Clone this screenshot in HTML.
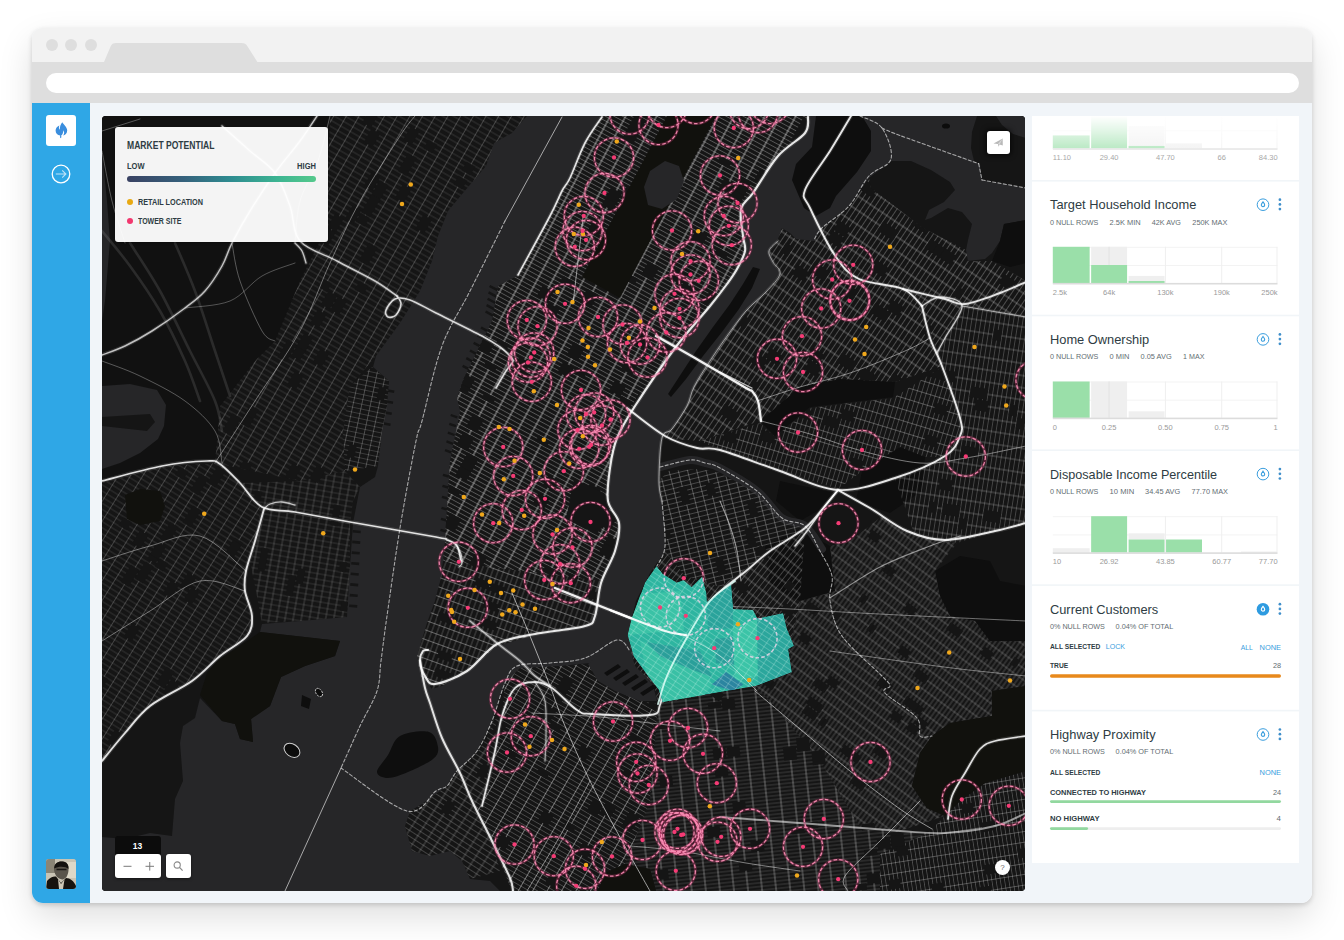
<!DOCTYPE html><html><head><meta charset="utf-8"><title>Market Potential</title><style>
*{box-sizing:border-box;margin:0;padding:0}
html,body{width:1344px;height:940px;overflow:hidden;background:#fff;font-family:"Liberation Sans",sans-serif;}
.win{position:absolute;left:32px;top:28px;width:1280px;height:875px;border-radius:11px;background:#f1f5f9;overflow:hidden;}
.shadow{position:absolute;left:32px;top:28px;width:1280px;height:875px;border-radius:11px;box-shadow:0 2px 5px rgba(0,0,0,.16),0 14px 34px rgba(0,0,0,.13);}
.tabs{position:absolute;left:0;top:0;width:1280px;height:34px;background:#f2f2f2;}
.dot{position:absolute;top:11px;width:12px;height:12px;border-radius:50%;background:#dedede;}
.urlrow{position:absolute;left:0;top:34px;width:1280px;height:41px;background:#dedede;}
.url{position:absolute;left:13.5px;top:11px;width:1253px;height:20px;border-radius:10px;background:#fff;}
.side{position:absolute;left:0;top:75px;width:58px;height:800px;background:#2fa7e6;}
.logo{position:absolute;left:14px;top:12px;width:30px;height:31px;border-radius:3px;background:#fff;}
.avatar{position:absolute;left:14px;top:756px;width:30px;height:30px;border-radius:3px;overflow:hidden;background:#b9b4a6;}
.map{position:absolute;left:70px;top:87.5px;width:923px;height:775px;border-radius:4px;overflow:hidden;background:#1b1b1b;}
.legend{position:absolute;left:13px;top:11px;width:213px;height:115px;border-radius:3px;background:rgba(255,255,255,.955);box-shadow:0 1px 3px rgba(0,0,0,.3);color:#2e3c43;font-weight:bold;}
.legend .t{position:absolute;left:12px;top:13px;font-size:10.4px;white-space:nowrap;transform-origin:0 0;transform:scaleX(.824)}
.legend .lo{position:absolute;left:12px;top:34.5px;font-size:8.4px;transform-origin:0 0;transform:scaleX(.9)}
.legend .hi{position:absolute;right:12px;top:34.5px;font-size:8.4px;transform-origin:100% 0;transform:scaleX(.9)}
.legend .bar{position:absolute;left:12px;top:49.5px;width:189px;height:6px;border-radius:3px;background:linear-gradient(90deg,#3a4263 0%,#35617c 30%,#2e8c90 55%,#3db592 80%,#55c98c 100%);}
.legend .it{position:absolute;left:23px;font-size:8.4px;white-space:nowrap;transform-origin:0 0;transform:scaleX(.885)}
.legend .d{position:absolute;left:11.5px;width:6.5px;height:6.5px;border-radius:50%;}
.zoomlbl{position:absolute;left:12.5px;top:720px;width:46px;height:20px;background:#0c0c0c;border-radius:3px 3px 0 0;color:#fff;font-size:8.5px;font-weight:bold;text-align:center;line-height:20px;}
.zoombox{position:absolute;left:12.5px;top:738px;width:46px;height:24px;background:#fff;border-radius:3px;box-shadow:0 1px 3px rgba(0,0,0,.5);}
.searchbox{position:absolute;left:64px;top:738px;width:24.5px;height:24px;background:#fff;border-radius:3px;box-shadow:0 1px 3px rgba(0,0,0,.5);}
.sharebox{position:absolute;left:884.8px;top:15.3px;width:23px;height:23px;background:#fff;border-radius:3px;box-shadow:0 0 5px 2px rgba(0,0,0,.55);}
.help{position:absolute;left:893px;top:744px;width:15px;height:15px;border-radius:50%;background:#fff;color:#666;font-size:8px;text-align:center;line-height:15.5px;}
.panel{position:absolute;left:1000px;top:87.5px;width:267px;height:747px;background:#fff;overflow:hidden;}
</style></head><body><div class="shadow"></div><div class="win"><div class="tabs"><div class="dot" style="left:13.5px"></div><div class="dot" style="left:33px"></div><div class="dot" style="left:53px"></div><svg style="position:absolute;left:0;top:0" width="300" height="34"><path d="M72 34 L78.6 18.5 Q80 15.1 84 15.1 L209.5 15.1 Q213.6 15.1 215.4 18.3 L225.4 34 Z" fill="#dedede"/></svg></div><div class="urlrow"><div class="url"></div></div><div class="side"><div class="logo"><svg width="30" height="31" viewBox="0 0 30 31"><path d="M16.3 7.2 C17.6 9.6 21.2 12 21.2 15.6 C21.2 18.6 19 20.2 17.2 20.4 C18.6 18.6 18.4 16.6 17.2 15.2 C17.4 17.6 16.4 19.6 15.2 20.4 L15.4 22.2 L14.7 23.2 L14 22.2 L14.2 20.5 C11.6 20.3 9.6 18.4 9.6 15.6 C9.6 12.6 11.6 11.2 13.4 10.4 C12.6 12.2 12.8 13.8 13.8 14.8 C13.6 11.8 14.8 9 16.3 7.2 Z" fill="#3a8ede"/></svg></div><svg style="position:absolute;left:18px;top:59.5px" width="22" height="22" viewBox="0 0 22 22"><circle cx="11" cy="11" r="8.8" fill="none" stroke="#fff" stroke-width="1.3"/><path d="M5.8 11 H15.6 M12.2 7.4 L15.9 11 L12.2 14.6" fill="none" stroke="#bfe3f8" stroke-width="1.1"/></svg><div class="avatar"><svg width="30" height="30" viewBox="0 0 30 30"><rect width="30" height="30" fill="#c9c4b4"/><rect x="0" y="0" width="9" height="14" fill="#8a8576"/><rect x="21" y="3" width="9" height="16" fill="#ddd8c8"/><path d="M8 11 C8 4 13 2 16.5 2.5 C21 3 23 6 22.5 11 C22.3 15 21 19 17 20.5 C12.5 20.5 9 17 8 11Z" fill="#5a554c"/><path d="M8.2 9.5 C8 4.5 12 2 16.5 2.5 C21 3 23 6 22.4 10 C20 7.5 13 7 8.2 9.5Z" fill="#14120f"/><path d="M10.5 10.5 H20.5" stroke="#1a1815" stroke-width="1.4"/><path d="M0 30 L1 22 C4 18 8 17 10 17.5 L15 24 L20 19 C24 19 28 22 30 27 L30 30Z" fill="#16130f"/><path d="M12 20 L15 25 L18.5 20.5 L17 30 L13 30Z" fill="#cfc9b8"/></svg></div></div><div class="map"><svg style="position:absolute;left:0;top:0" width="923.5" height="775" viewBox="102 115 923.5 775"><defs><pattern id="p_mn" width="13.6" height="4.1" patternUnits="userSpaceOnUse" patternTransform="rotate(28.4)"><path d="M0 2.05H13.6" stroke="#fff" stroke-opacity="0.285" stroke-width="0.9" fill="none"/><path d="M6.80 0V4.1" stroke="#fff" stroke-opacity="0.644" stroke-width="0.9" fill="none"/></pattern><pattern id="p_ms" width="5.2" height="9" patternUnits="userSpaceOnUse" patternTransform="rotate(20)"><path d="M0 4.50H5.2" stroke="#fff" stroke-opacity="0.396" stroke-width="0.8" fill="none"/><path d="M2.60 0V9" stroke="#fff" stroke-opacity="0.288" stroke-width="0.8" fill="none"/></pattern><pattern id="p_nj1" width="11" height="5.4" patternUnits="userSpaceOnUse" patternTransform="rotate(30)"><path d="M0 2.70H11" stroke="#fff" stroke-opacity="0.160" stroke-width="0.8" fill="none"/><path d="M5.50 0V5.4" stroke="#fff" stroke-opacity="0.240" stroke-width="0.8" fill="none"/></pattern><pattern id="p_hob" width="8.5" height="4.8" patternUnits="userSpaceOnUse" patternTransform="rotate(12)"><path d="M0 2.40H8.5" stroke="#fff" stroke-opacity="0.192" stroke-width="0.8" fill="none"/><path d="M4.25 0V4.8" stroke="#fff" stroke-opacity="0.288" stroke-width="0.8" fill="none"/></pattern><pattern id="p_jc" width="10.5" height="5.2" patternUnits="userSpaceOnUse" patternTransform="rotate(32)"><path d="M0 2.60H10.5" stroke="#fff" stroke-opacity="0.152" stroke-width="0.8" fill="none"/><path d="M5.25 0V5.2" stroke="#fff" stroke-opacity="0.228" stroke-width="0.8" fill="none"/></pattern><pattern id="p_jcd" width="8" height="5.5" patternUnits="userSpaceOnUse" patternTransform="rotate(10)"><path d="M0 2.75H8" stroke="#fff" stroke-opacity="0.160" stroke-width="0.8" fill="none"/><path d="M4.00 0V5.5" stroke="#fff" stroke-opacity="0.240" stroke-width="0.8" fill="none"/></pattern><pattern id="p_jcn" width="8" height="5.5" patternUnits="userSpaceOnUse" patternTransform="rotate(10)"><path d="M0 2.75H8" stroke="#fff" stroke-opacity="0.160" stroke-width="0.8" fill="none"/><path d="M4.00 0V5.5" stroke="#fff" stroke-opacity="0.240" stroke-width="0.8" fill="none"/></pattern><pattern id="p_ast" width="4.9" height="12" patternUnits="userSpaceOnUse" patternTransform="rotate(34)"><path d="M0 6.00H4.9" stroke="#fff" stroke-opacity="0.402" stroke-width="0.8" fill="none"/><path d="M2.45 0V12" stroke="#fff" stroke-opacity="0.315" stroke-width="0.8" fill="none"/></pattern><pattern id="p_sun" width="4.6" height="11" patternUnits="userSpaceOnUse" patternTransform="rotate(17)"><path d="M0 5.50H4.6" stroke="#fff" stroke-opacity="0.322" stroke-width="0.8" fill="none"/><path d="M2.30 0V11" stroke="#fff" stroke-opacity="0.252" stroke-width="0.8" fill="none"/></pattern><pattern id="p_jh" width="4.6" height="12" patternUnits="userSpaceOnUse" patternTransform="rotate(9)"><path d="M0 6.00H4.6" stroke="#fff" stroke-opacity="0.322" stroke-width="0.8" fill="none"/><path d="M2.30 0V12" stroke="#fff" stroke-opacity="0.252" stroke-width="0.8" fill="none"/></pattern><pattern id="p_gp" width="9" height="4.8" patternUnits="userSpaceOnUse" patternTransform="rotate(-14)"><path d="M0 2.40H9" stroke="#fff" stroke-opacity="0.270" stroke-width="0.8" fill="none"/><path d="M4.50 0V4.8" stroke="#fff" stroke-opacity="0.330" stroke-width="0.8" fill="none"/></pattern><pattern id="p_wb" width="4.6" height="10" patternUnits="userSpaceOnUse" patternTransform="rotate(38)"><path d="M0 5.00H4.6" stroke="#fff" stroke-opacity="0.330" stroke-width="0.8" fill="none"/><path d="M2.30 0V10" stroke="#fff" stroke-opacity="0.270" stroke-width="0.8" fill="none"/></pattern><pattern id="p_bw" width="4.0" height="9.5" patternUnits="userSpaceOnUse" patternTransform="rotate(36)"><path d="M0 4.75H4.0" stroke="#fff" stroke-opacity="0.297" stroke-width="0.8" fill="none"/><path d="M2.00 0V9.5" stroke="#fff" stroke-opacity="0.270" stroke-width="0.8" fill="none"/></pattern><pattern id="p_bs" width="14" height="3.7" patternUnits="userSpaceOnUse" patternTransform="rotate(-6)"><path d="M0 1.85H14" stroke="#fff" stroke-opacity="0.205" stroke-width="0.8" fill="none"/><path d="M7.00 0V3.7" stroke="#fff" stroke-opacity="0.462" stroke-width="0.8" fill="none"/></pattern><pattern id="p_eny" width="4.2" height="10.6" patternUnits="userSpaceOnUse" patternTransform="rotate(-9)"><path d="M0 5.30H4.2" stroke="#fff" stroke-opacity="0.297" stroke-width="0.8" fill="none"/><path d="M2.10 0V10.6" stroke="#fff" stroke-opacity="0.270" stroke-width="0.8" fill="none"/></pattern><pattern id="p_db" width="12.5" height="4.2" patternUnits="userSpaceOnUse" patternTransform="rotate(30)"><path d="M0 2.10H12.5" stroke="#fff" stroke-opacity="0.252" stroke-width="0.8" fill="none"/><path d="M6.25 0V4.2" stroke="#fff" stroke-opacity="0.468" stroke-width="0.8" fill="none"/></pattern><pattern id="p_rh" width="10" height="5" patternUnits="userSpaceOnUse" patternTransform="rotate(33)"><path d="M0 2.50H10" stroke="#fff" stroke-opacity="0.243" stroke-width="0.8" fill="none"/><path d="M5.00 0V5" stroke="#fff" stroke-opacity="0.297" stroke-width="0.8" fill="none"/></pattern><clipPath id="c_grids"><polygon points="602.0,115.0 585.0,142.0 570.0,177.0 562.0,190.0 550.0,215.0 517.0,275.0 498.0,285.0 492.0,320.0 464.0,377.0 457.0,397.0 460.0,410.0 450.0,460.0 447.0,505.0 445.0,540.0 443.0,560.0 603.0,580.0 615.0,550.0 619.0,522.0 608.0,500.0 610.0,467.0 617.0,437.0 635.0,405.0 675.0,347.0 710.0,305.0 727.0,283.0 745.0,250.0 741.0,208.0 753.0,192.0 778.0,155.0 805.0,132.0 808.0,115.0"/><polygon points="443.0,560.0 440.0,580.0 435.0,600.0 427.0,622.0 417.0,655.0 421.0,675.0 432.0,688.0 442.0,685.0 470.0,668.0 497.0,645.0 535.0,634.0 585.0,626.0 597.0,612.0 601.0,582.0 603.0,580.0"/><polygon points="330.0,115.0 527.0,115.0 512.0,132.0 494.0,142.0 486.0,165.0 463.0,192.0 448.0,210.0 438.0,235.0 432.0,260.0 420.0,290.0 400.0,322.0 376.0,355.0 350.0,385.0 343.0,430.0 345.0,470.0 300.0,480.0 215.0,462.0 220.0,405.0 255.0,360.0 275.0,340.0 300.0,280.0 325.0,230.0"/><polygon points="372.0,366.0 389.0,380.0 387.0,405.0 382.0,430.0 378.0,465.0 345.0,470.0 343.0,430.0 350.0,385.0"/><polygon points="102.0,482.0 162.0,465.0 220.0,462.0 262.0,506.0 255.0,540.0 246.0,570.0 245.0,590.0 252.0,615.0 247.0,635.0 220.0,655.0 192.0,680.0 150.0,705.0 125.0,732.0 102.0,760.0"/><polygon points="266.0,508.0 350.0,522.0 350.0,565.0 347.0,616.0 300.0,620.0 262.0,622.0 256.0,590.0 250.0,560.0"/><polygon points="240.0,482.0 262.0,506.0 295.0,511.0 350.0,521.0 353.0,500.0 360.0,486.0 345.0,470.0 300.0,480.0"/><polygon points="778.0,238.0 782.0,227.0 796.0,238.0 814.0,240.0 822.0,227.0 849.0,205.0 869.0,177.0 871.0,187.0 923.0,227.0 966.0,249.0 968.0,260.0 992.0,260.0 1026.0,280.0 1026.0,316.0 962.0,305.0 937.0,352.0 922.0,305.0 930.0,337.0 942.0,365.0 895.0,381.0 840.0,378.0 800.0,386.0 760.0,420.0 700.0,440.0 662.0,437.0 672.0,428.0 687.0,405.0 694.0,386.0 708.0,363.0 725.0,338.0 746.0,310.0 766.0,291.0 780.0,273.0 773.0,261.0 769.0,250.0"/><polygon points="760.0,422.0 775.0,436.0 810.0,407.0 850.0,402.0 893.0,397.0 942.0,366.0 960.0,418.0 960.0,436.0 945.0,456.0 925.0,456.0 900.0,446.0 862.0,470.0 838.0,488.0 780.0,470.0 720.0,449.0 700.0,440.0"/><polygon points="937.0,352.0 962.0,305.0 1026.0,316.0 1026.0,522.0 995.0,530.0 957.0,542.0 915.0,535.0 895.0,478.0 945.0,456.0 960.0,436.0 960.0,418.0 942.0,366.0"/><polygon points="662.0,500.0 659.0,480.0 668.0,470.0 700.0,468.0 720.0,472.0 757.0,492.0 782.0,518.0 805.0,528.0 770.0,550.0 720.0,586.0 685.0,575.0 665.0,550.0 664.0,520.0"/><polygon points="650.0,572.0 665.0,550.0 685.0,575.0 720.0,586.0 770.0,550.0 805.0,528.0 800.0,600.0 790.0,646.0 792.0,672.0 754.0,684.0 658.0,703.0 654.0,684.0 635.0,665.0 629.0,642.0 635.0,612.0"/><polygon points="792.0,672.0 790.0,646.0 800.0,600.0 835.0,590.0 830.0,545.0 850.0,540.0 882.0,515.0 915.0,535.0 957.0,542.0 935.0,570.0 940.0,595.0 950.0,615.0 975.0,620.0 990.0,640.0 1026.0,640.0 1026.0,685.0 992.0,690.0 992.0,715.0 950.0,722.0 932.0,735.0 920.0,752.0 912.0,785.0 927.0,807.0 945.0,815.0 900.0,830.0 860.0,826.0 820.0,760.0 770.0,700.0 754.0,684.0"/><polygon points="658.0,703.0 754.0,684.0 770.0,700.0 820.0,760.0 860.0,826.0 900.0,830.0 928.0,832.0 880.0,853.0 880.0,890.0 656.0,890.0 650.0,868.0 625.0,863.0 650.0,800.0 655.0,740.0"/><polygon points="928.0,832.0 945.0,815.0 960.0,800.0 985.0,782.0 1026.0,770.0 1026.0,890.0 880.0,890.0 880.0,853.0"/><polygon points="505.0,682.0 520.0,667.0 560.0,665.0 588.0,663.0 598.0,680.0 615.0,690.0 640.0,700.0 658.0,703.0 655.0,740.0 650.0,800.0 625.0,863.0 605.0,872.0 598.0,890.0 512.0,890.0 492.0,840.0 472.0,800.0 482.0,805.0 495.0,750.0 502.0,715.0"/><polygon points="410.0,810.0 422.0,803.0 447.0,785.0 457.0,770.0 477.0,750.0 492.0,720.0 502.0,715.0 495.0,750.0 482.0,805.0 472.0,800.0 492.0,840.0 500.0,870.0 470.0,878.0 462.0,860.0 450.0,850.0 430.0,855.0 412.0,850.0 405.0,825.0"/></clipPath><clipPath id="c_teal"><polygon points="656.5,565.0 662.7,572.8 676.7,581.6 683.7,579.0 691.6,586.0 702.2,575.5 706.2,591.3 707.0,601.0 731.0,583.4 733.0,608.0 753.0,608.8 757.5,617.6 783.0,612.3 786.5,627.3 793.8,644.8 788.0,648.0 791.7,671.0 755.7,685.0 662.7,701.0 659.0,688.7 645.0,671.0 633.7,655.4 627.6,634.3 632.0,616.7 645.0,581.6"/></clipPath><pattern id="p_teal" width="9" height="4.6" patternUnits="userSpaceOnUse" patternTransform="rotate(34)"><path d="M0 2.3H9 M4.5 0V4.6" stroke="#dffcf4" stroke-opacity=".33" stroke-width=".7" fill="none"/></pattern></defs><rect x="102" y="115" width="924" height="775" fill="#151515"/><polygon points="527.0,115.0 512.0,132.0 494.0,142.0 486.0,165.0 463.0,192.0 448.0,210.0 438.0,235.0 432.0,260.0 420.0,290.0 400.0,322.0 376.0,355.0 373.0,366.0 389.0,380.0 387.0,405.0 382.0,430.0 378.0,465.0 375.0,476.0 360.0,486.0 353.0,522.0 350.0,565.0 347.0,616.0 300.0,620.0 262.0,623.0 260.0,631.0 340.0,640.0 335.0,655.0 305.0,665.0 281.0,676.0 270.0,705.0 251.0,718.0 253.0,741.0 240.0,738.0 235.0,723.0 222.0,720.0 200.0,697.0 195.0,717.0 183.0,725.0 180.0,742.0 183.0,780.0 175.0,798.0 172.0,835.0 150.0,832.0 125.0,838.0 102.0,836.0 102.0,890.0 500.0,890.0 490.0,880.0 470.0,878.0 462.0,860.0 450.0,850.0 430.0,855.0 412.0,850.0 405.0,825.0 410.0,810.0 422.0,803.0 447.0,785.0 457.0,770.0 477.0,750.0 492.0,720.0 505.0,682.0 520.0,667.0 560.0,665.0 590.0,662.0 617.0,660.0 635.0,655.0 630.0,625.0 636.0,600.0 650.0,572.0 665.0,550.0 664.0,520.0 662.0,500.0 659.0,480.0 662.0,437.0 672.0,428.0 687.0,405.0 694.0,386.0 708.0,363.0 725.0,338.0 746.0,310.0 766.0,291.0 780.0,273.0 773.0,261.0 769.0,250.0 778.0,238.0 782.0,227.0 790.0,232.0 796.0,238.0 814.0,240.0 822.0,227.0 849.0,205.0 869.0,177.0 891.0,160.0 911.0,160.0 931.0,169.0 950.0,181.0 955.0,189.0 944.0,201.0 929.0,209.0 925.0,219.0 931.0,217.0 948.0,207.0 962.0,211.0 972.0,223.0 968.0,239.0 966.0,249.0 968.0,260.0 985.0,258.0 992.0,252.0 1000.0,240.0 1004.0,223.0 1026.0,219.0 1026.0,187.0 982.0,179.0 980.0,163.0 974.0,160.0 971.0,147.0 972.0,131.0 977.0,115.0" fill="#262628"/><polygon points="602.0,115.0 585.0,142.0 570.0,177.0 562.0,190.0 550.0,215.0 517.0,275.0 498.0,285.0 492.0,320.0 464.0,377.0 457.0,397.0 460.0,410.0 450.0,460.0 447.0,505.0 445.0,540.0 443.0,560.0 440.0,580.0 435.0,600.0 427.0,622.0 417.0,655.0 421.0,675.0 432.0,688.0 442.0,685.0 470.0,668.0 497.0,645.0 535.0,634.0 585.0,626.0 597.0,612.0 601.0,582.0 603.0,580.0 615.0,550.0 619.0,522.0 608.0,500.0 610.0,467.0 617.0,437.0 635.0,405.0 675.0,347.0 710.0,305.0 727.0,283.0 745.0,250.0 741.0,208.0 753.0,192.0 778.0,155.0 805.0,132.0 808.0,115.0" fill="#151515"/><polygon points="816.0,115.0 812.0,146.0 796.0,163.0 792.0,179.0 804.0,207.0 816.0,215.0 830.0,207.0 836.0,195.0 857.0,171.0 871.0,150.0 871.0,130.0 862.0,115.0" fill="#0e0e0e"/><polygon points="760.0,268.0 752.0,287.0 739.0,308.0 722.0,331.0 703.0,355.0 686.0,378.0 671.0,396.0 668.0,393.0 681.0,373.0 696.0,350.0 713.0,326.0 730.0,303.0 743.0,283.0 753.0,266.0" fill="#0e0e0e"/><path d="M400.0 735.0 C406.8 731.2 422.7 729.2 429.0 731.0 C435.3 732.8 437.3 741.5 438.0 746.0 C438.7 750.5 438.0 753.8 433.0 758.0 C428.0 762.2 415.5 767.8 408.0 771.0 C400.5 774.2 393.2 777.0 388.0 777.0 C382.8 777.0 377.0 774.8 377.0 771.0 C377.0 767.2 384.2 760.0 388.0 754.0 C391.8 748.0 393.2 738.8 400.0 735.0Z" fill="#0e0e0e"/><polygon points="588.0,663.0 617.0,640.0 630.0,648.0 635.0,665.0 653.0,684.0 657.0,700.0 640.0,700.0 615.0,690.0 598.0,680.0" fill="#262628"/><polygon points="604.0,672.0 618.0,663.0 621.0,666.0 607.0,675.0" fill="#0e0e0e"/><polygon points="613.0,677.0 627.0,668.0 630.0,671.0 616.0,680.0" fill="#0e0e0e"/><polygon points="622.0,682.0 636.0,673.0 639.0,676.0 625.0,685.0" fill="#0e0e0e"/><polygon points="631.0,687.0 645.0,678.0 648.0,681.0 634.0,690.0" fill="#0e0e0e"/><polygon points="640.0,692.0 654.0,683.0 657.0,686.0 643.0,695.0" fill="#0e0e0e"/><polygon points="760.0,420.0 800.0,386.0 840.0,378.0 895.0,381.0 893.0,396.0 850.0,401.0 810.0,406.0 775.0,435.0" fill="#0e0e0e"/><polygon points="862.0,470.0 900.0,446.0 925.0,456.0 922.0,490.0 890.0,512.0 856.0,500.0" fill="#0e0e0e"/><polygon points="780.0,480.0 835.0,492.0 826.0,505.0 800.0,520.0 776.0,500.0" fill="#0e0e0e"/><polygon points="935.0,570.0 960.0,555.0 990.0,560.0 1000.0,580.0 1026.0,585.0 1026.0,640.0 990.0,640.0 975.0,620.0 950.0,615.0 940.0,595.0" fill="#0e0e0e"/><polygon points="765.0,545.0 800.0,528.0 830.0,545.0 835.0,590.0 800.0,600.0 770.0,585.0" fill="#0e0e0e"/><polygon points="1004.0,223.0 1026.0,219.0 1026.0,262.0 1010.0,266.0 992.0,260.0 1000.0,240.0" fill="#0e0e0e"/><polygon points="996.0,115.0 1026.0,115.0 1026.0,137.0 1013.0,133.0 1002.0,124.0" fill="#262628"/><polygon points="498.1,288.1 490.2,283.9 489.0,286.0 496.9,290.3" fill="#151515"/><polygon points="497.1,294.5 489.2,290.3 488.0,292.4 495.9,296.7" fill="#151515"/><polygon points="496.1,300.9 488.2,296.7 487.0,298.8 494.9,303.1" fill="#151515"/><polygon points="495.1,307.3 487.2,303.1 486.0,305.2 493.9,309.5" fill="#151515"/><polygon points="494.1,313.7 486.2,309.5 485.0,311.6 492.9,315.9" fill="#151515"/><polygon points="487.7,328.8 481.6,325.4 480.4,327.6 486.6,330.9" fill="#151515"/><polygon points="484.1,336.4 477.9,333.1 476.8,335.2 482.9,338.6" fill="#151515"/><polygon points="480.4,344.1 474.2,340.8 473.1,342.9 479.3,346.2" fill="#151515"/><polygon points="476.7,351.8 470.6,348.4 469.4,350.6 475.6,353.9" fill="#151515"/><polygon points="473.1,359.4 466.9,356.1 465.8,358.2 471.9,361.6" fill="#151515"/><polygon points="469.4,367.1 463.2,363.8 462.1,365.9 468.3,369.2" fill="#151515"/><polygon points="457.7,415.3 451.1,412.9 450.3,415.1 456.9,417.5" fill="#151515"/><polygon points="456.3,424.1 449.7,421.7 448.9,423.9 455.5,426.3" fill="#151515"/><polygon points="454.9,432.9 448.3,430.5 447.5,432.7 454.1,435.1" fill="#151515"/><polygon points="453.5,441.7 446.9,439.3 446.1,441.5 452.7,443.9" fill="#151515"/><polygon points="452.1,450.5 445.5,448.1 444.7,450.3 451.3,452.7" fill="#151515"/><polygon points="449.1,474.3 443.3,472.8 442.6,475.1 448.4,476.7" fill="#151515"/><polygon points="448.6,485.3 442.8,483.8 442.1,486.1 447.9,487.7" fill="#151515"/><polygon points="448.1,496.3 442.3,494.8 441.6,497.1 447.4,498.7" fill="#151515"/><polygon points="447.6,507.3 441.8,505.8 441.1,508.1 446.9,509.7" fill="#151515"/><polygon points="447.1,518.3 441.3,516.8 440.6,519.1 446.4,520.7" fill="#151515"/><polygon points="446.6,529.3 440.8,527.8 440.1,530.1 445.9,531.7" fill="#151515"/><polygon points="387.6,388.2 394.5,389.4 394.0,392.0 387.1,390.8" fill="#151515"/><polygon points="386.4,399.2 393.2,400.4 392.8,403.0 385.9,401.8" fill="#151515"/><polygon points="385.1,410.2 392.0,411.4 391.5,414.0 384.6,412.8" fill="#151515"/><polygon points="383.9,421.2 390.7,422.4 390.3,425.0 383.4,423.8" fill="#151515"/><polygon points="352.9,529.0 360.8,529.7 360.6,532.3 352.6,531.6" fill="#151515"/><polygon points="352.4,539.6 360.3,540.3 360.1,542.9 352.1,542.2" fill="#151515"/><polygon points="351.9,550.3 359.8,551.0 359.6,553.6 351.6,552.9" fill="#151515"/><polygon points="351.4,560.9 359.3,561.6 359.1,564.2 351.1,563.5" fill="#151515"/><polygon points="350.9,571.5 358.8,572.2 358.6,574.8 350.6,574.1" fill="#151515"/><polygon points="350.4,582.1 358.3,582.8 358.1,585.4 350.1,584.7" fill="#151515"/><polygon points="349.9,592.8 357.8,593.5 357.6,596.1 349.6,595.4" fill="#151515"/><polygon points="349.4,603.4 357.3,604.1 357.1,606.7 349.1,606.0" fill="#151515"/><path d="M660.0 466.0 C665.0 464.8 682.5 459.7 690.0 459.0 C697.5 458.3 700.0 460.7 705.0 462.0 C710.0 463.3 711.3 462.3 720.0 467.0 C728.7 471.7 746.7 481.7 757.0 490.0 C767.3 498.3 774.0 511.2 782.0 517.0 C790.0 522.8 798.3 519.8 805.0 525.0 C811.7 530.2 819.2 544.2 822.0 548.0" fill="none" stroke="#262628" stroke-opacity="1" stroke-width="8" stroke-linecap="round" stroke-linejoin="round"/><polygon points="102.0,115.0 330.0,115.0 325.0,230.0 300.0,280.0 275.0,340.0 255.0,360.0 220.0,405.0 215.0,462.0 162.0,465.0 102.0,482.0" fill="#111111"/><polygon points="102.0,385.0 130.0,383.0 157.0,389.0 166.0,404.0 164.0,425.0 158.0,438.0 140.0,452.0 120.0,462.0 102.0,468.0" fill="#262628"/><polygon points="102.0,416.0 150.0,413.0 155.0,421.0 147.0,430.0 102.0,425.0" fill="#151515"/><polygon points="102.0,150.0 107.0,200.0 110.0,240.0 105.0,300.0 102.0,320.0" fill="#262628"/><polygon points="602.0,115.0 585.0,142.0 570.0,177.0 562.0,190.0 550.0,215.0 517.0,275.0 498.0,285.0 492.0,320.0 464.0,377.0 457.0,397.0 460.0,410.0 450.0,460.0 447.0,505.0 445.0,540.0 443.0,560.0 603.0,580.0 615.0,550.0 619.0,522.0 608.0,500.0 610.0,467.0 617.0,437.0 635.0,405.0 675.0,347.0 710.0,305.0 727.0,283.0 745.0,250.0 741.0,208.0 753.0,192.0 778.0,155.0 805.0,132.0 808.0,115.0" fill="url(#p_mn)"/><polygon points="443.0,560.0 440.0,580.0 435.0,600.0 427.0,622.0 417.0,655.0 421.0,675.0 432.0,688.0 442.0,685.0 470.0,668.0 497.0,645.0 535.0,634.0 585.0,626.0 597.0,612.0 601.0,582.0 603.0,580.0" fill="url(#p_ms)"/><polygon points="330.0,115.0 527.0,115.0 512.0,132.0 494.0,142.0 486.0,165.0 463.0,192.0 448.0,210.0 438.0,235.0 432.0,260.0 420.0,290.0 400.0,322.0 376.0,355.0 350.0,385.0 343.0,430.0 345.0,470.0 300.0,480.0 215.0,462.0 220.0,405.0 255.0,360.0 275.0,340.0 300.0,280.0 325.0,230.0" fill="url(#p_nj1)"/><polygon points="372.0,366.0 389.0,380.0 387.0,405.0 382.0,430.0 378.0,465.0 345.0,470.0 343.0,430.0 350.0,385.0" fill="url(#p_hob)"/><polygon points="102.0,482.0 162.0,465.0 220.0,462.0 262.0,506.0 255.0,540.0 246.0,570.0 245.0,590.0 252.0,615.0 247.0,635.0 220.0,655.0 192.0,680.0 150.0,705.0 125.0,732.0 102.0,760.0" fill="url(#p_jc)"/><polygon points="266.0,508.0 350.0,522.0 350.0,565.0 347.0,616.0 300.0,620.0 262.0,622.0 256.0,590.0 250.0,560.0" fill="url(#p_jcd)"/><polygon points="240.0,482.0 262.0,506.0 295.0,511.0 350.0,521.0 353.0,500.0 360.0,486.0 345.0,470.0 300.0,480.0" fill="url(#p_jcn)"/><polygon points="778.0,238.0 782.0,227.0 796.0,238.0 814.0,240.0 822.0,227.0 849.0,205.0 869.0,177.0 871.0,187.0 923.0,227.0 966.0,249.0 968.0,260.0 992.0,260.0 1026.0,280.0 1026.0,316.0 962.0,305.0 937.0,352.0 922.0,305.0 930.0,337.0 942.0,365.0 895.0,381.0 840.0,378.0 800.0,386.0 760.0,420.0 700.0,440.0 662.0,437.0 672.0,428.0 687.0,405.0 694.0,386.0 708.0,363.0 725.0,338.0 746.0,310.0 766.0,291.0 780.0,273.0 773.0,261.0 769.0,250.0" fill="url(#p_ast)"/><polygon points="760.0,422.0 775.0,436.0 810.0,407.0 850.0,402.0 893.0,397.0 942.0,366.0 960.0,418.0 960.0,436.0 945.0,456.0 925.0,456.0 900.0,446.0 862.0,470.0 838.0,488.0 780.0,470.0 720.0,449.0 700.0,440.0" fill="url(#p_sun)"/><polygon points="937.0,352.0 962.0,305.0 1026.0,316.0 1026.0,522.0 995.0,530.0 957.0,542.0 915.0,535.0 895.0,478.0 945.0,456.0 960.0,436.0 960.0,418.0 942.0,366.0" fill="url(#p_jh)"/><polygon points="662.0,500.0 659.0,480.0 668.0,470.0 700.0,468.0 720.0,472.0 757.0,492.0 782.0,518.0 805.0,528.0 770.0,550.0 720.0,586.0 685.0,575.0 665.0,550.0 664.0,520.0" fill="url(#p_gp)"/><polygon points="650.0,572.0 665.0,550.0 685.0,575.0 720.0,586.0 770.0,550.0 805.0,528.0 800.0,600.0 790.0,646.0 792.0,672.0 754.0,684.0 658.0,703.0 654.0,684.0 635.0,665.0 629.0,642.0 635.0,612.0" fill="url(#p_wb)"/><polygon points="792.0,672.0 790.0,646.0 800.0,600.0 835.0,590.0 830.0,545.0 850.0,540.0 882.0,515.0 915.0,535.0 957.0,542.0 935.0,570.0 940.0,595.0 950.0,615.0 975.0,620.0 990.0,640.0 1026.0,640.0 1026.0,685.0 992.0,690.0 992.0,715.0 950.0,722.0 932.0,735.0 920.0,752.0 912.0,785.0 927.0,807.0 945.0,815.0 900.0,830.0 860.0,826.0 820.0,760.0 770.0,700.0 754.0,684.0" fill="url(#p_bw)"/><polygon points="658.0,703.0 754.0,684.0 770.0,700.0 820.0,760.0 860.0,826.0 900.0,830.0 928.0,832.0 880.0,853.0 880.0,890.0 656.0,890.0 650.0,868.0 625.0,863.0 650.0,800.0 655.0,740.0" fill="url(#p_bs)"/><polygon points="928.0,832.0 945.0,815.0 960.0,800.0 985.0,782.0 1026.0,770.0 1026.0,890.0 880.0,890.0 880.0,853.0" fill="url(#p_eny)"/><polygon points="505.0,682.0 520.0,667.0 560.0,665.0 588.0,663.0 598.0,680.0 615.0,690.0 640.0,700.0 658.0,703.0 655.0,740.0 650.0,800.0 625.0,863.0 605.0,872.0 598.0,890.0 512.0,890.0 492.0,840.0 472.0,800.0 482.0,805.0 495.0,750.0 502.0,715.0" fill="url(#p_db)"/><polygon points="410.0,810.0 422.0,803.0 447.0,785.0 457.0,770.0 477.0,750.0 492.0,720.0 502.0,715.0 495.0,750.0 482.0,805.0 472.0,800.0 492.0,840.0 500.0,870.0 470.0,878.0 462.0,860.0 450.0,850.0 430.0,855.0 412.0,850.0 405.0,825.0" fill="url(#p_rh)"/><g fill="#151515" clip-path="url(#c_grids)"><rect x="678.6" y="145.3" width="12.5" height="7.2" transform="rotate(28.4 684.8 148.9)"/><rect x="624.9" y="126.1" width="12.5" height="15.4" transform="rotate(28.4 631.1 133.8)"/><rect x="590.0" y="219.2" width="12.5" height="15.4" transform="rotate(28.4 596.3 226.9)"/><rect x="460.5" y="374.9" width="12.5" height="11.3" transform="rotate(28.4 466.8 380.6)"/><rect x="456.6" y="384.2" width="12.5" height="7.2" transform="rotate(28.4 462.9 387.8)"/><rect x="793.5" y="130.8" width="12.5" height="11.3" transform="rotate(28.4 799.8 136.5)"/><rect x="730.6" y="190.0" width="12.5" height="11.3" transform="rotate(28.4 736.8 195.6)"/><rect x="573.5" y="368.1" width="12.5" height="7.2" transform="rotate(28.4 579.8 371.7)"/><rect x="623.1" y="360.3" width="12.5" height="11.3" transform="rotate(28.4 629.3 365.9)"/><rect x="604.9" y="536.9" width="12.5" height="11.3" transform="rotate(28.4 611.1 542.5)"/><rect x="544.8" y="476.4" width="12.5" height="11.3" transform="rotate(28.4 551.0 482.1)"/><rect x="612.3" y="263.8" width="12.5" height="15.4" transform="rotate(28.4 618.5 271.5)"/><rect x="543.6" y="566.4" width="12.5" height="7.2" transform="rotate(28.4 549.9 570.0)"/><rect x="623.4" y="188.0" width="12.5" height="11.3" transform="rotate(28.4 629.7 193.6)"/><rect x="495.9" y="340.1" width="12.5" height="7.2" transform="rotate(28.4 502.1 343.7)"/><rect x="569.4" y="343.1" width="12.5" height="15.4" transform="rotate(28.4 575.6 350.8)"/><rect x="536.5" y="436.7" width="12.5" height="7.2" transform="rotate(28.4 542.7 440.3)"/><rect x="459.1" y="432.7" width="12.5" height="15.4" transform="rotate(28.4 465.3 440.4)"/><rect x="539.1" y="286.9" width="12.5" height="11.3" transform="rotate(28.4 545.3 292.5)"/><rect x="457.4" y="466.4" width="12.5" height="11.3" transform="rotate(28.4 463.7 472.1)"/><rect x="705.7" y="291.0" width="12.5" height="15.4" transform="rotate(28.4 712.0 298.7)"/><rect x="545.2" y="304.2" width="12.5" height="11.3" transform="rotate(28.4 551.4 309.8)"/><rect x="679.9" y="283.8" width="12.5" height="11.3" transform="rotate(28.4 686.1 289.4)"/><rect x="611.4" y="381.9" width="12.5" height="11.3" transform="rotate(28.4 617.6 387.5)"/><rect x="635.3" y="394.8" width="12.5" height="11.3" transform="rotate(28.4 641.5 400.5)"/><rect x="619.4" y="397.6" width="12.5" height="7.2" transform="rotate(28.4 625.7 401.2)"/><rect x="602.7" y="510.3" width="12.5" height="15.4" transform="rotate(28.4 608.9 518.0)"/><rect x="582.7" y="289.8" width="12.5" height="15.4" transform="rotate(28.4 589.0 297.5)"/><rect x="666.6" y="138.8" width="12.5" height="7.2" transform="rotate(28.4 672.8 142.4)"/><rect x="482.5" y="393.5" width="12.5" height="7.2" transform="rotate(28.4 488.7 397.1)"/><rect x="446.0" y="514.1" width="12.5" height="15.4" transform="rotate(28.4 452.2 521.8)"/><rect x="560.8" y="277.3" width="12.5" height="7.2" transform="rotate(28.4 567.0 280.9)"/><rect x="480.0" y="336.8" width="12.5" height="15.4" transform="rotate(28.4 486.3 344.5)"/><rect x="616.2" y="258.6" width="12.5" height="11.3" transform="rotate(28.4 622.4 264.3)"/><rect x="535.0" y="494.4" width="12.5" height="11.3" transform="rotate(28.4 541.3 500.1)"/><rect x="629.5" y="205.3" width="12.5" height="11.3" transform="rotate(28.4 635.8 210.9)"/><rect x="484.2" y="361.8" width="12.5" height="7.2" transform="rotate(28.4 490.4 365.4)"/><rect x="715.2" y="249.0" width="12.5" height="7.2" transform="rotate(28.4 721.5 252.6)"/><rect x="693.3" y="230.4" width="12.5" height="11.3" transform="rotate(28.4 699.5 236.1)"/><rect x="515.9" y="358.2" width="12.5" height="11.3" transform="rotate(28.4 522.2 363.9)"/><rect x="586.5" y="485.0" width="12.5" height="11.3" transform="rotate(28.4 592.8 490.6)"/><rect x="624.2" y="274.4" width="12.5" height="7.2" transform="rotate(28.4 630.5 278.0)"/><rect x="603.7" y="196.0" width="12.5" height="11.3" transform="rotate(28.4 609.9 201.6)"/><rect x="601.0" y="544.1" width="12.5" height="11.3" transform="rotate(28.4 607.2 549.7)"/><rect x="468.8" y="414.6" width="12.5" height="15.4" transform="rotate(28.4 475.1 422.3)"/><rect x="607.6" y="188.7" width="12.5" height="11.3" transform="rotate(28.4 613.8 194.4)"/><rect x="472.1" y="551.6" width="12.5" height="15.4" transform="rotate(28.4 478.4 559.3)"/><rect x="799.4" y="117.9" width="12.5" height="15.4" transform="rotate(28.4 805.6 125.6)"/><rect x="736.4" y="177.1" width="12.5" height="15.4" transform="rotate(28.4 742.7 184.8)"/><rect x="671.8" y="270.1" width="12.5" height="11.3" transform="rotate(28.4 678.1 275.7)"/><rect x="447.7" y="486.5" width="12.5" height="7.2" transform="rotate(28.4 453.9 490.1)"/><rect x="600.7" y="516.0" width="12.5" height="11.3" transform="rotate(28.4 607.0 521.6)"/><rect x="559.6" y="363.2" width="12.5" height="11.3" transform="rotate(28.4 565.9 368.9)"/><rect x="463.3" y="453.6" width="12.5" height="15.4" transform="rotate(28.4 469.5 461.3)"/><rect x="756.2" y="171.2" width="12.5" height="11.3" transform="rotate(28.4 762.4 176.9)"/><rect x="630.7" y="115.3" width="12.5" height="15.4" transform="rotate(28.4 637.0 123.0)"/><rect x="720.6" y="179.9" width="12.5" height="11.3" transform="rotate(28.4 726.8 185.6)"/><rect x="644.0" y="262.3" width="12.5" height="15.4" transform="rotate(28.4 650.2 270.0)"/><rect x="718.3" y="157.5" width="12.5" height="7.2" transform="rotate(28.4 724.6 161.1)"/><rect x="662.6" y="344.3" width="12.5" height="11.3" transform="rotate(28.4 668.8 350.0)"/><rect x="636.7" y="335.0" width="12.5" height="11.3" transform="rotate(28.4 643.0 340.7)"/><rect x="587.0" y="590.7" width="14.6" height="7.9" transform="rotate(20 594.3 594.6)"/><rect x="568.2" y="573.3" width="9.4" height="7.9" transform="rotate(20 572.9 577.3)"/><rect x="483.6" y="600.9" width="14.6" height="7.9" transform="rotate(20 490.9 604.9)"/><rect x="489.8" y="584.0" width="14.6" height="7.9" transform="rotate(20 497.1 588.0)"/><rect x="437.6" y="651.2" width="14.6" height="7.9" transform="rotate(20 444.9 655.2)"/><rect x="433.8" y="669.9" width="19.8" height="7.9" transform="rotate(20 443.7 673.9)"/><rect x="482.4" y="619.6" width="14.6" height="7.9" transform="rotate(20 489.7 623.6)"/><rect x="437.6" y="613.9" width="19.8" height="7.9" transform="rotate(20 447.5 617.8)"/><rect x="475.1" y="578.7" width="14.6" height="7.9" transform="rotate(20 482.4 582.6)"/><rect x="320.0" y="279.3" width="9.9" height="9.8" transform="rotate(30 324.9 284.2)"/><rect x="333.6" y="297.0" width="9.9" height="15.2" transform="rotate(30 338.6 304.6)"/><rect x="367.0" y="129.2" width="9.9" height="15.2" transform="rotate(30 371.9 136.8)"/><rect x="425.4" y="140.7" width="9.9" height="9.8" transform="rotate(30 430.4 145.6)"/><rect x="455.4" y="176.7" width="9.9" height="9.8" transform="rotate(30 460.4 181.6)"/><rect x="398.4" y="184.8" width="9.9" height="15.2" transform="rotate(30 403.4 192.4)"/><rect x="313.3" y="310.2" width="9.9" height="15.2" transform="rotate(30 318.2 317.8)"/><rect x="406.4" y="127.0" width="9.9" height="15.2" transform="rotate(30 411.3 134.6)"/><rect x="374.0" y="180.4" width="9.9" height="20.6" transform="rotate(30 378.9 190.7)"/><rect x="367.1" y="172.9" width="9.9" height="15.2" transform="rotate(30 372.1 180.5)"/><rect x="365.9" y="194.4" width="9.9" height="20.6" transform="rotate(30 370.8 204.7)"/><rect x="244.4" y="404.9" width="9.9" height="20.6" transform="rotate(30 249.3 415.2)"/><rect x="324.1" y="291.5" width="9.9" height="15.2" transform="rotate(30 329.0 299.1)"/><rect x="322.5" y="228.2" width="9.9" height="15.2" transform="rotate(30 327.5 235.8)"/><rect x="288.0" y="464.0" width="9.9" height="15.2" transform="rotate(30 293.0 471.6)"/><rect x="294.4" y="342.9" width="9.9" height="15.2" transform="rotate(30 299.3 350.5)"/><rect x="365.6" y="109.7" width="9.9" height="15.2" transform="rotate(30 370.5 117.3)"/><rect x="463.5" y="162.7" width="9.9" height="9.8" transform="rotate(30 468.5 167.6)"/><rect x="330.6" y="214.2" width="9.9" height="15.2" transform="rotate(30 335.6 221.8)"/><rect x="239.1" y="460.7" width="9.9" height="15.2" transform="rotate(30 244.1 468.3)"/><rect x="312.5" y="465.6" width="9.9" height="15.2" transform="rotate(30 317.4 473.2)"/><rect x="299.8" y="333.6" width="9.9" height="15.2" transform="rotate(30 304.7 341.2)"/><rect x="226.7" y="413.4" width="9.9" height="20.6" transform="rotate(30 231.7 423.7)"/><rect x="241.7" y="415.0" width="9.9" height="9.8" transform="rotate(30 246.6 419.9)"/><rect x="290.4" y="371.8" width="9.9" height="15.2" transform="rotate(30 295.4 379.4)"/><rect x="282.2" y="339.4" width="9.9" height="20.6" transform="rotate(30 287.1 349.7)"/><rect x="363.3" y="242.8" width="9.9" height="20.6" transform="rotate(30 368.3 253.1)"/><rect x="316.1" y="349.3" width="9.9" height="15.2" transform="rotate(30 321.1 356.9)"/><rect x="402.4" y="153.2" width="9.9" height="20.6" transform="rotate(30 407.3 163.5)"/><rect x="418.9" y="215.3" width="9.9" height="15.2" transform="rotate(30 423.8 222.9)"/><rect x="356.6" y="281.8" width="9.9" height="9.8" transform="rotate(30 361.6 286.7)"/><rect x="357.8" y="213.9" width="9.9" height="9.8" transform="rotate(30 362.7 218.8)"/><rect x="348.2" y="205.7" width="9.9" height="15.2" transform="rotate(30 353.2 213.3)"/><rect x="377.7" y="386.0" width="7.4" height="13.4" transform="rotate(12 381.4 392.7)"/><rect x="348.1" y="443.5" width="7.4" height="13.4" transform="rotate(12 351.8 450.2)"/><rect x="176.9" y="467.5" width="9.4" height="9.4" transform="rotate(32 181.6 472.2)"/><rect x="160.6" y="666.7" width="9.4" height="19.8" transform="rotate(32 165.3 676.6)"/><rect x="150.6" y="546.6" width="9.4" height="14.6" transform="rotate(32 155.3 553.9)"/><rect x="94.1" y="674.2" width="9.4" height="19.8" transform="rotate(32 98.8 684.1)"/><rect x="139.6" y="561.6" width="9.4" height="19.8" transform="rotate(32 144.3 571.5)"/><rect x="110.4" y="729.9" width="9.4" height="14.6" transform="rotate(32 115.1 737.2)"/><rect x="231.6" y="538.5" width="9.4" height="9.4" transform="rotate(32 236.3 543.2)"/><rect x="228.9" y="540.3" width="9.4" height="14.6" transform="rotate(32 233.6 547.6)"/><rect x="135.6" y="531.0" width="9.4" height="14.6" transform="rotate(32 140.3 538.3)"/><rect x="125.2" y="564.9" width="9.4" height="19.8" transform="rotate(32 129.9 574.8)"/><rect x="211.9" y="465.8" width="9.4" height="19.8" transform="rotate(32 216.6 475.7)"/><rect x="166.8" y="679.3" width="9.4" height="14.6" transform="rotate(32 171.5 686.6)"/><rect x="187.1" y="505.4" width="9.4" height="19.8" transform="rotate(32 191.8 515.3)"/><rect x="153.4" y="542.2" width="9.4" height="14.6" transform="rotate(32 158.1 549.5)"/><rect x="164.4" y="521.9" width="9.4" height="19.8" transform="rotate(32 169.1 531.8)"/><rect x="183.5" y="573.2" width="9.4" height="14.6" transform="rotate(32 188.2 580.5)"/><rect x="194.7" y="473.4" width="9.4" height="19.8" transform="rotate(32 199.4 483.3)"/><rect x="186.9" y="587.6" width="9.4" height="14.6" transform="rotate(32 191.6 594.9)"/><rect x="120.5" y="518.1" width="9.4" height="9.4" transform="rotate(32 125.2 522.8)"/><rect x="127.1" y="623.9" width="9.4" height="14.6" transform="rotate(32 131.8 631.2)"/><rect x="135.6" y="531.0" width="9.4" height="14.6" transform="rotate(32 140.3 538.3)"/><rect x="166.3" y="580.9" width="9.4" height="14.6" transform="rotate(32 171.0 588.2)"/><rect x="156.8" y="559.2" width="9.4" height="9.4" transform="rotate(32 161.5 563.9)"/><rect x="297.2" y="567.5" width="6.9" height="15.5" transform="rotate(10 300.7 575.2)"/><rect x="258.8" y="555.1" width="6.9" height="15.5" transform="rotate(10 262.2 562.8)"/><rect x="287.4" y="574.1" width="6.9" height="21.0" transform="rotate(10 290.9 584.6)"/><rect x="340.7" y="600.2" width="6.9" height="10.0" transform="rotate(10 344.1 605.2)"/><rect x="259.8" y="546.9" width="6.9" height="21.0" transform="rotate(10 263.2 557.4)"/><rect x="339.5" y="560.9" width="6.9" height="10.0" transform="rotate(10 342.9 565.9)"/><rect x="332.3" y="503.9" width="6.9" height="21.0" transform="rotate(10 335.8 514.4)"/><rect x="254.5" y="490.1" width="6.9" height="10.0" transform="rotate(10 258.0 495.1)"/><rect x="888.9" y="376.0" width="18.6" height="10.9" transform="rotate(34 898.2 381.5)"/><rect x="862.2" y="182.7" width="13.7" height="10.9" transform="rotate(34 869.0 188.1)"/><rect x="847.5" y="286.9" width="8.8" height="10.9" transform="rotate(34 851.9 292.4)"/><rect x="749.3" y="379.9" width="8.8" height="10.9" transform="rotate(34 753.7 385.4)"/><rect x="828.6" y="232.4" width="13.7" height="10.9" transform="rotate(34 835.5 237.9)"/><rect x="720.2" y="407.0" width="18.6" height="10.9" transform="rotate(34 729.5 412.5)"/><rect x="810.1" y="265.0" width="18.6" height="10.9" transform="rotate(34 819.4 270.4)"/><rect x="808.9" y="349.3" width="13.7" height="10.9" transform="rotate(34 815.7 354.8)"/><rect x="835.3" y="222.5" width="13.7" height="10.9" transform="rotate(34 842.2 227.9)"/><rect x="930.2" y="244.7" width="18.6" height="10.9" transform="rotate(34 939.5 250.1)"/><rect x="806.2" y="362.0" width="13.7" height="10.9" transform="rotate(34 813.1 367.5)"/><rect x="793.7" y="266.7" width="13.7" height="10.9" transform="rotate(34 800.5 272.2)"/><rect x="857.8" y="369.5" width="18.6" height="10.9" transform="rotate(34 867.1 375.0)"/><rect x="954.2" y="286.5" width="8.8" height="10.9" transform="rotate(34 958.6 291.9)"/><rect x="912.5" y="218.3" width="18.6" height="10.9" transform="rotate(34 921.8 223.7)"/><rect x="782.5" y="243.1" width="8.8" height="10.9" transform="rotate(34 786.9 248.5)"/><rect x="752.2" y="354.5" width="13.7" height="10.9" transform="rotate(34 759.0 360.0)"/><rect x="923.3" y="323.5" width="8.8" height="10.9" transform="rotate(34 927.7 329.0)"/><rect x="1000.3" y="275.8" width="13.7" height="10.9" transform="rotate(34 1007.1 281.3)"/><rect x="767.0" y="350.1" width="13.7" height="10.9" transform="rotate(34 773.9 355.5)"/><rect x="873.3" y="262.5" width="13.7" height="10.9" transform="rotate(34 880.2 268.0)"/><rect x="871.0" y="306.1" width="18.6" height="10.9" transform="rotate(34 880.3 311.5)"/><rect x="927.0" y="239.2" width="8.8" height="10.9" transform="rotate(34 931.4 244.6)"/><rect x="888.3" y="301.6" width="13.7" height="10.9" transform="rotate(34 895.2 307.1)"/><rect x="878.8" y="224.5" width="18.6" height="10.9" transform="rotate(34 888.1 229.9)"/><rect x="837.5" y="355.8" width="18.6" height="10.9" transform="rotate(34 846.8 361.3)"/><rect x="739.6" y="315.5" width="8.8" height="10.9" transform="rotate(34 744.0 320.9)"/><rect x="940.8" y="250.2" width="13.7" height="10.9" transform="rotate(34 947.6 255.6)"/><rect x="841.0" y="409.4" width="12.8" height="9.9" transform="rotate(17 847.4 414.4)"/><rect x="924.6" y="435.0" width="12.8" height="9.9" transform="rotate(17 931.0 439.9)"/><rect x="760.0" y="430.0" width="8.2" height="9.9" transform="rotate(17 764.1 434.9)"/><rect x="930.7" y="367.8" width="12.8" height="9.9" transform="rotate(17 937.1 372.8)"/><rect x="850.1" y="458.2" width="12.8" height="9.9" transform="rotate(17 856.5 463.2)"/><rect x="934.2" y="403.4" width="12.8" height="9.9" transform="rotate(17 940.6 408.4)"/><rect x="723.7" y="431.1" width="12.8" height="9.9" transform="rotate(17 730.1 436.0)"/><rect x="762.1" y="431.3" width="12.8" height="9.9" transform="rotate(17 768.5 436.3)"/><rect x="798.2" y="407.8" width="12.8" height="9.9" transform="rotate(17 804.6 412.8)"/><rect x="822.3" y="415.9" width="17.4" height="9.9" transform="rotate(17 831.0 420.8)"/><rect x="965.4" y="445.8" width="8.2" height="10.9" transform="rotate(9 969.5 451.2)"/><rect x="975.1" y="399.1" width="12.8" height="10.9" transform="rotate(9 981.5 404.5)"/><rect x="942.5" y="369.6" width="12.8" height="10.9" transform="rotate(9 948.9 375.1)"/><rect x="983.2" y="510.1" width="17.4" height="10.9" transform="rotate(9 991.9 515.5)"/><rect x="944.6" y="503.6" width="12.8" height="10.9" transform="rotate(9 951.0 509.0)"/><rect x="970.1" y="386.5" width="17.4" height="10.9" transform="rotate(9 978.8 391.9)"/><rect x="1009.2" y="404.1" width="8.2" height="10.9" transform="rotate(9 1013.3 409.6)"/><rect x="942.3" y="503.6" width="17.4" height="10.9" transform="rotate(9 951.0 509.0)"/><rect x="993.2" y="328.7" width="8.2" height="10.9" transform="rotate(9 997.3 334.1)"/><rect x="960.8" y="445.8" width="17.4" height="10.9" transform="rotate(9 969.5 451.2)"/><rect x="958.6" y="517.6" width="8.2" height="10.9" transform="rotate(9 962.7 523.0)"/><rect x="939.2" y="478.4" width="12.8" height="10.9" transform="rotate(9 945.6 483.9)"/><rect x="928.7" y="500.7" width="8.2" height="10.9" transform="rotate(9 932.8 506.2)"/><rect x="1016.4" y="417.4" width="8.2" height="10.9" transform="rotate(9 1020.5 422.8)"/><rect x="748.1" y="537.9" width="7.9" height="8.6" transform="rotate(-14 752.0 542.2)"/><rect x="716.6" y="555.8" width="7.9" height="18.2" transform="rotate(-14 720.6 564.9)"/><rect x="680.6" y="485.6" width="7.9" height="18.2" transform="rotate(-14 684.5 494.7)"/><rect x="706.8" y="481.5" width="7.9" height="13.4" transform="rotate(-14 710.7 488.2)"/><rect x="662.5" y="529.5" width="7.9" height="8.6" transform="rotate(-14 666.4 533.8)"/><rect x="748.7" y="498.3" width="7.9" height="18.2" transform="rotate(-14 752.6 507.4)"/><rect x="745.7" y="526.2" width="7.9" height="13.4" transform="rotate(-14 749.7 532.9)"/><rect x="735.4" y="581.5" width="12.8" height="8.9" transform="rotate(38 741.8 585.9)"/><rect x="693.7" y="639.5" width="17.4" height="8.9" transform="rotate(38 702.4 643.9)"/><rect x="697.6" y="604.5" width="17.4" height="8.9" transform="rotate(38 706.3 608.9)"/><rect x="770.1" y="661.1" width="17.4" height="8.9" transform="rotate(38 778.8 665.6)"/><rect x="699.7" y="615.2" width="8.2" height="8.9" transform="rotate(38 703.8 619.7)"/><rect x="785.2" y="580.5" width="8.2" height="8.9" transform="rotate(38 789.3 584.9)"/><rect x="627.0" y="612.7" width="17.4" height="8.9" transform="rotate(38 635.7 617.2)"/><rect x="740.7" y="659.9" width="8.2" height="8.9" transform="rotate(38 744.8 664.4)"/><rect x="749.2" y="668.4" width="12.8" height="8.9" transform="rotate(38 755.6 672.9)"/><rect x="677.5" y="663.1" width="12.8" height="8.9" transform="rotate(38 683.9 667.6)"/><rect x="740.9" y="649.2" width="12.8" height="8.9" transform="rotate(38 747.3 653.6)"/><rect x="756.4" y="547.1" width="12.8" height="8.9" transform="rotate(38 762.8 551.6)"/><rect x="781.5" y="604.7" width="12.8" height="8.9" transform="rotate(38 787.9 609.2)"/><rect x="710.1" y="688.6" width="12.8" height="8.9" transform="rotate(38 716.5 693.0)"/><rect x="911.8" y="703.4" width="11.0" height="8.4" transform="rotate(36 917.3 707.6)"/><rect x="890.9" y="711.7" width="11.0" height="8.4" transform="rotate(36 896.4 715.9)"/><rect x="1011.7" y="657.1" width="7.0" height="8.4" transform="rotate(36 1015.2 661.3)"/><rect x="813.0" y="680.0" width="15.0" height="8.4" transform="rotate(36 820.5 684.2)"/><rect x="947.1" y="624.8" width="15.0" height="8.4" transform="rotate(36 954.6 629.0)"/><rect x="845.7" y="750.7" width="15.0" height="8.4" transform="rotate(36 853.2 754.9)"/><rect x="815.6" y="702.4" width="7.0" height="8.4" transform="rotate(36 819.1 706.6)"/><rect x="827.1" y="677.0" width="11.0" height="8.4" transform="rotate(36 832.6 681.2)"/><rect x="907.1" y="723.4" width="11.0" height="8.4" transform="rotate(36 912.6 727.6)"/><rect x="804.5" y="603.3" width="15.0" height="8.4" transform="rotate(36 812.0 607.5)"/><rect x="868.2" y="623.2" width="7.0" height="8.4" transform="rotate(36 871.7 627.4)"/><rect x="807.1" y="697.7" width="11.0" height="8.4" transform="rotate(36 812.6 701.9)"/><rect x="802.8" y="707.8" width="15.0" height="8.4" transform="rotate(36 810.3 712.0)"/><rect x="868.8" y="531.2" width="11.0" height="8.4" transform="rotate(36 874.3 535.4)"/><rect x="859.9" y="593.8" width="7.0" height="8.4" transform="rotate(36 863.4 598.0)"/><rect x="903.3" y="698.7" width="15.0" height="8.4" transform="rotate(36 910.8 702.9)"/><rect x="760.7" y="677.2" width="15.0" height="8.4" transform="rotate(36 768.2 681.4)"/><rect x="915.9" y="718.1" width="11.0" height="8.4" transform="rotate(36 921.4 722.3)"/><rect x="913.6" y="670.9" width="15.0" height="8.4" transform="rotate(36 921.1 675.1)"/><rect x="833.5" y="609.8" width="7.0" height="8.4" transform="rotate(36 837.0 614.0)"/><rect x="877.4" y="679.8" width="15.0" height="8.4" transform="rotate(36 884.9 684.0)"/><rect x="873.1" y="747.1" width="15.0" height="8.4" transform="rotate(36 880.6 751.3)"/><rect x="819.7" y="717.2" width="7.0" height="8.4" transform="rotate(36 823.2 721.4)"/><rect x="841.2" y="746.0" width="11.0" height="8.4" transform="rotate(36 846.7 750.2)"/><rect x="898.5" y="646.7" width="11.0" height="8.4" transform="rotate(36 904.0 650.9)"/><rect x="883.5" y="565.4" width="11.0" height="8.4" transform="rotate(36 889.0 569.6)"/><rect x="799.4" y="633.5" width="11.0" height="8.4" transform="rotate(36 804.9 637.7)"/><rect x="850.7" y="777.9" width="15.0" height="8.4" transform="rotate(36 858.2 782.1)"/><rect x="878.2" y="677.5" width="7.0" height="8.4" transform="rotate(36 881.7 681.7)"/><rect x="981.5" y="648.3" width="11.0" height="8.4" transform="rotate(36 987.0 652.5)"/><rect x="904.7" y="604.3" width="11.0" height="8.4" transform="rotate(36 910.2 608.5)"/><rect x="732.8" y="800.8" width="12.9" height="10.1" transform="rotate(-6 739.3 805.9)"/><rect x="655.5" y="868.5" width="12.9" height="10.1" transform="rotate(-6 661.9 873.5)"/><rect x="877.5" y="837.7" width="12.9" height="10.1" transform="rotate(-6 883.9 842.8)"/><rect x="864.3" y="848.4" width="12.9" height="6.4" transform="rotate(-6 870.8 851.6)"/><rect x="891.0" y="830.7" width="12.9" height="13.8" transform="rotate(-6 897.5 837.6)"/><rect x="653.9" y="721.7" width="12.9" height="6.4" transform="rotate(-6 660.4 724.9)"/><rect x="891.4" y="838.1" width="12.9" height="6.4" transform="rotate(-6 897.9 841.3)"/><rect x="708.1" y="701.1" width="12.9" height="6.4" transform="rotate(-6 714.5 704.3)"/><rect x="713.1" y="747.1" width="12.9" height="10.1" transform="rotate(-6 719.6 752.2)"/><rect x="707.3" y="825.8" width="12.9" height="10.1" transform="rotate(-6 713.8 830.9)"/><rect x="891.4" y="834.4" width="12.9" height="13.8" transform="rotate(-6 897.9 841.3)"/><rect x="751.0" y="839.9" width="12.9" height="10.1" transform="rotate(-6 757.5 844.9)"/><rect x="791.6" y="826.3" width="12.9" height="6.4" transform="rotate(-6 798.1 829.5)"/><rect x="796.7" y="736.5" width="12.9" height="13.8" transform="rotate(-6 803.1 743.4)"/><rect x="853.9" y="883.0" width="12.9" height="6.4" transform="rotate(-6 860.3 886.2)"/><rect x="722.0" y="697.8" width="12.9" height="10.1" transform="rotate(-6 728.5 702.9)"/><rect x="867.0" y="872.3" width="12.9" height="10.1" transform="rotate(-6 873.5 877.4)"/><rect x="861.6" y="822.6" width="12.9" height="6.4" transform="rotate(-6 868.1 825.8)"/><rect x="812.1" y="749.7" width="12.9" height="13.8" transform="rotate(-6 818.6 756.6)"/><rect x="715.0" y="765.5" width="12.9" height="10.1" transform="rotate(-6 721.5 770.6)"/><rect x="739.0" y="859.7" width="12.9" height="10.1" transform="rotate(-6 745.5 864.8)"/><rect x="805.2" y="821.1" width="12.9" height="6.4" transform="rotate(-6 811.6 824.3)"/><rect x="727.0" y="745.6" width="12.9" height="10.1" transform="rotate(-6 733.5 750.7)"/><rect x="783.5" y="745.3" width="12.9" height="13.8" transform="rotate(-6 790.0 752.2)"/><rect x="751.0" y="839.9" width="12.9" height="10.1" transform="rotate(-6 757.5 844.9)"/><rect x="659.7" y="775.0" width="12.9" height="10.1" transform="rotate(-6 666.2 780.1)"/><rect x="984.3" y="863.4" width="11.6" height="9.5" transform="rotate(-9 990.1 868.1)"/><rect x="979.3" y="885.6" width="11.6" height="9.5" transform="rotate(-9 985.1 890.4)"/><rect x="961.9" y="802.5" width="11.6" height="9.5" transform="rotate(-9 967.7 807.3)"/><rect x="1017.9" y="847.6" width="7.4" height="9.5" transform="rotate(-9 1021.6 852.4)"/><rect x="896.4" y="845.1" width="11.6" height="9.5" transform="rotate(-9 902.2 849.8)"/><rect x="932.0" y="882.4" width="11.6" height="9.5" transform="rotate(-9 937.8 887.1)"/><rect x="981.8" y="820.8" width="11.6" height="9.5" transform="rotate(-9 987.6 825.6)"/><rect x="888.9" y="878.5" width="11.6" height="9.5" transform="rotate(-9 894.7 883.2)"/><rect x="504.9" y="749.4" width="11.4" height="7.4" transform="rotate(30 510.6 753.1)"/><rect x="543.0" y="706.3" width="11.4" height="11.6" transform="rotate(30 548.7 712.1)"/><rect x="553.5" y="686.0" width="11.4" height="15.8" transform="rotate(30 559.2 693.9)"/><rect x="624.0" y="814.0" width="11.4" height="15.8" transform="rotate(30 629.7 821.9)"/><rect x="626.1" y="812.4" width="11.4" height="11.6" transform="rotate(30 631.8 818.2)"/><rect x="589.4" y="798.8" width="11.4" height="15.8" transform="rotate(30 595.1 806.7)"/><rect x="549.7" y="721.9" width="11.4" height="7.4" transform="rotate(30 555.4 725.6)"/><rect x="626.9" y="708.9" width="11.4" height="15.8" transform="rotate(30 632.6 716.8)"/><rect x="602.3" y="803.6" width="11.4" height="11.6" transform="rotate(30 608.0 809.4)"/><rect x="623.3" y="769.3" width="11.4" height="7.4" transform="rotate(30 629.0 773.0)"/><rect x="577.9" y="745.8" width="11.4" height="11.6" transform="rotate(30 583.6 751.6)"/><rect x="629.3" y="733.9" width="11.4" height="7.4" transform="rotate(30 635.0 737.6)"/><rect x="537.4" y="768.2" width="11.4" height="7.4" transform="rotate(30 543.1 771.9)"/><rect x="497.5" y="835.2" width="11.4" height="11.6" transform="rotate(30 503.2 841.0)"/><rect x="559.8" y="675.1" width="11.4" height="15.8" transform="rotate(30 565.5 683.0)"/><rect x="563.9" y="822.2" width="11.4" height="7.4" transform="rotate(30 569.6 825.9)"/><rect x="579.2" y="843.6" width="11.4" height="11.6" transform="rotate(30 584.9 849.4)"/><rect x="547.4" y="873.7" width="11.4" height="11.6" transform="rotate(30 553.1 879.5)"/><rect x="648.2" y="701.2" width="11.4" height="7.4" transform="rotate(30 653.9 704.9)"/><rect x="604.4" y="802.0" width="11.4" height="7.4" transform="rotate(30 610.1 805.7)"/><rect x="509.1" y="742.1" width="11.4" height="7.4" transform="rotate(30 514.8 745.8)"/><rect x="540.1" y="811.3" width="11.4" height="11.6" transform="rotate(30 545.8 817.1)"/><rect x="495.3" y="719.9" width="8.9" height="14.0" transform="rotate(33 499.7 726.9)"/><rect x="443.5" y="799.6" width="8.9" height="14.0" transform="rotate(33 448.0 806.6)"/><rect x="476.0" y="728.8" width="8.9" height="19.0" transform="rotate(33 480.4 738.3)"/><rect x="479.1" y="763.1" width="8.9" height="14.0" transform="rotate(33 483.6 770.1)"/></g><polygon points="574.0,478.0 604.0,492.0 610.0,500.0 608.0,520.0 596.0,533.0 566.0,518.0" fill="#151515"/><polygon points="582.0,276.0 620.0,297.0 716.0,115.0 667.0,115.0" fill="#11110d"/><polygon points="665.0,160.0 679.0,165.0 684.0,180.0 677.0,198.0 662.0,208.0 648.0,204.0 644.0,186.0 650.0,170.0" fill="#262628"/><polygon points="260.0,631.0 340.0,640.0 335.0,655.0 305.0,665.0 281.0,676.0 270.0,705.0 251.0,718.0 253.0,741.0 240.0,738.0 235.0,723.0 222.0,720.0 200.0,694.0 207.0,672.0 217.0,660.0 240.0,645.0" fill="#11110d"/><polygon points="125.0,494.0 140.0,488.0 160.0,490.0 165.0,505.0 160.0,520.0 140.0,524.0 127.0,518.0" fill="#11110d"/><polygon points="605.0,872.0 625.0,863.0 650.0,868.0 656.0,890.0 598.0,890.0" fill="#11110d"/><polygon points="932.0,735.0 950.0,722.0 992.0,715.0 992.0,690.0 1026.0,685.0 1026.0,770.0 985.0,782.0 960.0,800.0 945.0,815.0 927.0,807.0 912.0,785.0 920.0,752.0" fill="#11110d"/><ellipse cx="292" cy="749.3" rx="8.6" ry="6.2" transform="rotate(35 292 749.3)" fill="#0c0c0c" stroke="#cfcfcf" stroke-width="1"/><polygon points="302.0,694.0 311.0,698.0 309.0,708.0 301.0,705.0" fill="#0e0e0e"/><ellipse cx="319" cy="691.5" rx="4.6" ry="3" transform="rotate(55 319 691.5)" fill="#0c0c0c" stroke="#cfcfcf" stroke-width=".9" stroke-dasharray="2 1"/><ellipse cx="946" cy="125" rx="4" ry="2.6" fill="#0c0c0c"/><path d="M470.0 620.0 C474.5 623.7 488.7 635.3 497.0 642.0 C505.3 648.7 513.7 654.5 520.0 660.0 C526.3 665.5 530.0 670.8 535.0 675.0 C540.0 679.2 547.5 683.3 550.0 685.0" fill="none" stroke="#fff" stroke-opacity="0.28" stroke-width="3.2" stroke-linecap="round" stroke-linejoin="round"/><path d="M470.0 620.0 C474.5 623.7 488.7 635.3 497.0 642.0 C505.3 648.7 513.7 654.5 520.0 660.0 C526.3 665.5 530.0 670.8 535.0 675.0 C540.0 679.2 547.5 683.3 550.0 685.0" fill="none" stroke="#fff" stroke-opacity="0.6" stroke-width="1.2" stroke-linecap="round" stroke-linejoin="round"/><path d="M512.0 592.0 C515.0 599.2 523.7 619.5 530.0 635.0 C536.3 650.5 544.2 670.0 550.0 685.0 C555.8 700.0 558.3 709.2 565.0 725.0 C571.7 740.8 580.5 760.8 590.0 780.0 C599.5 799.2 612.0 821.7 622.0 840.0 C632.0 858.3 645.3 881.7 650.0 890.0" fill="none" stroke="#fff" stroke-opacity="0.6" stroke-width="1.0" stroke-linecap="round" stroke-linejoin="round"/><path d="M590.0 780.0 C585.0 789.2 570.5 816.7 560.0 835.0 C549.5 853.3 532.5 880.8 527.0 890.0" fill="none" stroke="#fff" stroke-opacity="0.55" stroke-width="0.9" stroke-linecap="round" stroke-linejoin="round"/><path d="M532.0 712.0 C543.3 712.7 580.3 714.3 600.0 716.0 C619.7 717.7 630.0 719.7 650.0 722.0 C670.0 724.3 708.3 728.7 720.0 730.0" fill="none" stroke="#fff" stroke-opacity="0.45" stroke-width="1.0" stroke-linecap="round" stroke-linejoin="round"/><path d="M720.0 816.0 C733.3 817.0 770.0 819.7 800.0 822.0 C830.0 824.3 875.8 828.3 900.0 830.0 C924.2 831.7 929.2 832.8 945.0 832.0 C960.8 831.2 981.5 828.3 995.0 825.0 C1008.5 821.7 1020.8 814.2 1026.0 812.0" fill="none" stroke="#fff" stroke-opacity="0.55" stroke-width="1.9" stroke-linecap="round" stroke-linejoin="round"/><path d="M630.0 845.0 C638.3 845.8 660.7 847.2 680.0 850.0 C699.3 852.8 726.0 858.7 746.0 862.0 C766.0 865.3 791.0 868.7 800.0 870.0" fill="none" stroke="#fff" stroke-opacity="0.45" stroke-width="1.0" stroke-linecap="round" stroke-linejoin="round"/><path d="M755.0 690.0 C762.5 696.3 784.2 714.7 800.0 728.0 C815.8 741.3 833.3 756.7 850.0 770.0 C866.7 783.3 886.3 798.3 900.0 808.0 C913.7 817.7 926.7 824.7 932.0 828.0" fill="none" stroke="#fff" stroke-opacity="0.55" stroke-width="1.0" stroke-linecap="round" stroke-linejoin="round"/><path d="M920.0 800.0 C913.3 806.7 892.5 827.5 880.0 840.0 C867.5 852.5 850.3 866.7 845.0 875.0 C839.7 883.3 847.5 887.5 848.0 890.0" fill="none" stroke="#fff" stroke-opacity="0.5" stroke-width="1.0" stroke-linecap="round" stroke-linejoin="round"/><path d="M720.0 605.0 C731.7 605.5 766.7 606.8 790.0 608.0 C813.3 609.2 835.0 610.7 860.0 612.0 C885.0 613.3 912.3 614.7 940.0 616.0 C967.7 617.3 1011.7 619.3 1026.0 620.0" fill="none" stroke="#fff" stroke-opacity="0.4" stroke-width="1.0" stroke-linecap="round" stroke-linejoin="round"/><path d="M830.0 597.0 C838.3 591.8 863.3 574.7 880.0 566.0 C896.7 557.3 916.7 550.2 930.0 545.0 C943.3 539.8 955.0 536.7 960.0 535.0" fill="none" stroke="#fff" stroke-opacity="0.5" stroke-width="1.1" stroke-linecap="round" stroke-linejoin="round"/><path d="M830.0 650.0 C841.7 651.7 878.3 657.0 900.0 660.0 C921.7 663.0 939.0 665.5 960.0 668.0 C981.0 670.5 1015.0 673.8 1026.0 675.0" fill="none" stroke="#fff" stroke-opacity="0.4" stroke-width="1.0" stroke-linecap="round" stroke-linejoin="round"/><path d="M720.0 371.0 L752.0 387.0" fill="none" stroke="#fff" stroke-opacity="0.7" stroke-width="1.3" stroke-linecap="round" stroke-linejoin="round"/><path d="M720.0 500.0 C721.7 504.2 727.2 516.7 730.0 525.0 C732.8 533.3 735.2 540.8 737.0 550.0 C738.8 559.2 740.3 575.0 741.0 580.0" fill="none" stroke="#fff" stroke-opacity="0.55" stroke-width="1.1" stroke-linecap="round" stroke-linejoin="round"/><path d="M757.0 400.0 C764.2 397.7 784.5 390.7 800.0 386.0 C815.5 381.3 832.5 378.0 850.0 372.0 C867.5 366.0 891.7 355.8 905.0 350.0 C918.3 344.2 925.8 339.2 930.0 337.0" fill="none" stroke="#fff" stroke-opacity="0.45" stroke-width="1.0" stroke-linecap="round" stroke-linejoin="round"/><path d="M761.0 420.0 C769.2 422.2 793.2 428.0 810.0 433.0 C826.8 438.0 843.7 445.2 862.0 450.0 C880.3 454.8 902.7 460.8 920.0 462.0 C937.3 463.2 948.3 459.8 966.0 457.0 C983.7 454.2 1016.0 447.0 1026.0 445.0" fill="none" stroke="#fff" stroke-opacity="0.45" stroke-width="1.0" stroke-linecap="round" stroke-linejoin="round"/><path d="M583.0 216.0 C582.2 223.3 579.7 245.5 578.0 260.0 C576.3 274.5 573.8 295.8 573.0 303.0" fill="none" stroke="#fff" stroke-opacity="0.55" stroke-width="1.0" stroke-linecap="round" stroke-linejoin="round"/><path d="M102.0 560.0 C110.0 557.5 133.7 549.2 150.0 545.0 C166.3 540.8 184.0 530.8 200.0 535.0 C216.0 539.2 238.3 564.2 246.0 570.0" fill="none" stroke="#fff" stroke-opacity="0.4" stroke-width="1.0" stroke-linecap="round" stroke-linejoin="round"/><path d="M102.0 640.0 C110.0 635.0 133.7 620.0 150.0 610.0 C166.3 600.0 184.2 583.3 200.0 580.0 C215.8 576.7 237.5 588.3 245.0 590.0" fill="none" stroke="#fff" stroke-opacity="0.4" stroke-width="1.0" stroke-linecap="round" stroke-linejoin="round"/><path d="M215.0 462.0 C221.7 451.7 240.8 422.0 255.0 400.0 C269.2 378.0 287.5 353.0 300.0 330.0 C312.5 307.0 320.0 283.7 330.0 262.0 C340.0 240.3 348.3 221.2 360.0 200.0 C371.7 178.8 390.8 149.2 400.0 135.0 C409.2 120.8 412.5 118.3 415.0 115.0" fill="none" stroke="#fff" stroke-opacity="0.4" stroke-width="1.0" stroke-linecap="round" stroke-linejoin="round"/><path d="M102.0 230.0 C106.7 235.8 120.3 251.7 130.0 265.0 C139.7 278.3 150.8 294.2 160.0 310.0 C169.2 325.8 178.3 345.0 185.0 360.0 C191.7 375.0 197.5 393.3 200.0 400.0" fill="none" stroke="#fff" stroke-opacity="0.11" stroke-width="2.6" stroke-linecap="round" stroke-linejoin="round"/><path d="M130.0 242.0 C135.0 250.0 150.0 272.0 160.0 290.0 C170.0 308.0 180.8 331.7 190.0 350.0 C199.2 368.3 209.7 386.7 215.0 400.0 C220.3 413.3 220.8 425.0 222.0 430.0" fill="none" stroke="#fff" stroke-opacity="0.11" stroke-width="2.6" stroke-linecap="round" stroke-linejoin="round"/><path d="M175.0 242.0 C178.3 250.0 188.3 272.0 195.0 290.0 C201.7 308.0 209.2 332.5 215.0 350.0 C220.8 367.5 227.5 387.5 230.0 395.0" fill="none" stroke="#fff" stroke-opacity="0.11" stroke-width="2.6" stroke-linecap="round" stroke-linejoin="round"/><path d="M102.0 360.0 C108.3 362.5 126.2 368.3 140.0 375.0 C153.8 381.7 172.5 390.8 185.0 400.0 C197.5 409.2 208.8 419.7 215.0 430.0 C221.2 440.3 220.8 456.7 222.0 462.0" fill="none" stroke="#fff" stroke-opacity="0.3" stroke-width="1.0" stroke-linecap="round" stroke-linejoin="round"/><path d="M232.0 242.0 C233.3 248.3 235.0 265.3 240.0 280.0 C245.0 294.7 256.2 320.0 262.0 330.0 C267.8 340.0 272.8 338.3 275.0 340.0" fill="none" stroke="#fff" stroke-opacity="0.3" stroke-width="1.0" stroke-linecap="round" stroke-linejoin="round"/><path d="M185.0 307.0 C192.5 305.8 217.2 305.3 230.0 300.0 C242.8 294.7 251.2 281.3 262.0 275.0 C272.8 268.7 289.5 264.2 295.0 262.0" fill="none" stroke="#fff" stroke-opacity="0.28" stroke-width="1.0" stroke-linecap="round" stroke-linejoin="round"/><path d="M102.0 150.0 C103.7 158.3 108.2 184.7 112.0 200.0 C115.8 215.3 122.8 235.0 125.0 242.0" fill="none" stroke="#fff" stroke-opacity="0.3" stroke-width="1.0" stroke-linecap="round" stroke-linejoin="round"/><path d="M102.0 130.0 L140.0 118.0" fill="none" stroke="#fff" stroke-opacity="0.3" stroke-width="1.0" stroke-linecap="round" stroke-linejoin="round"/><path d="M330.0 115.0 C328.0 122.5 323.0 145.8 318.0 160.0 C313.0 174.2 303.8 186.3 300.0 200.0 C296.2 213.7 295.8 235.0 295.0 242.0" fill="none" stroke="#fff" stroke-opacity="0.3" stroke-width="1.0" stroke-linecap="round" stroke-linejoin="round"/><path d="M317.0 115.0 C314.2 119.2 307.0 130.5 300.0 140.0 C293.0 149.5 283.3 160.3 275.0 172.0 C266.7 183.7 257.2 198.3 250.0 210.0 C242.8 221.7 236.7 232.8 232.0 242.0 C227.3 251.2 226.5 257.0 222.0 265.0 C217.5 273.0 211.2 283.0 205.0 290.0 C198.8 297.0 193.8 300.3 185.0 307.0 C176.2 313.7 162.0 323.7 152.0 330.0 C142.0 336.3 133.3 341.0 125.0 345.0 C116.7 349.0 105.8 352.5 102.0 354.0" fill="none" stroke="#fff" stroke-opacity="0.13" stroke-width="3.7" stroke-linecap="round" stroke-linejoin="round"/><path d="M317.0 115.0 C314.2 119.2 307.0 130.5 300.0 140.0 C293.0 149.5 283.3 160.3 275.0 172.0 C266.7 183.7 257.2 198.3 250.0 210.0 C242.8 221.7 236.7 232.8 232.0 242.0 C227.3 251.2 226.5 257.0 222.0 265.0 C217.5 273.0 211.2 283.0 205.0 290.0 C198.8 297.0 193.8 300.3 185.0 307.0 C176.2 313.7 162.0 323.7 152.0 330.0 C142.0 336.3 133.3 341.0 125.0 345.0 C116.7 349.0 105.8 352.5 102.0 354.0" fill="none" stroke="#fff" stroke-opacity="0.7" stroke-width="1.5" stroke-linecap="round" stroke-linejoin="round"/><path d="M222.0 125.0 C226.7 129.2 241.2 142.2 250.0 150.0 C258.8 157.8 268.3 162.8 275.0 172.0 C281.7 181.2 285.8 193.7 290.0 205.0 C294.2 216.3 292.2 230.8 300.0 240.0 C307.8 249.2 324.5 253.3 337.0 260.0 C349.5 266.7 365.0 274.2 375.0 280.0 C385.0 285.8 393.3 292.5 397.0 295.0" fill="none" stroke="#fff" stroke-opacity="0.13" stroke-width="3.7" stroke-linecap="round" stroke-linejoin="round"/><path d="M222.0 125.0 C226.7 129.2 241.2 142.2 250.0 150.0 C258.8 157.8 268.3 162.8 275.0 172.0 C281.7 181.2 285.8 193.7 290.0 205.0 C294.2 216.3 292.2 230.8 300.0 240.0 C307.8 249.2 324.5 253.3 337.0 260.0 C349.5 266.7 365.0 274.2 375.0 280.0 C385.0 285.8 393.3 292.5 397.0 295.0" fill="none" stroke="#fff" stroke-opacity="0.72" stroke-width="1.5" stroke-linecap="round" stroke-linejoin="round"/><path d="M397.0 295.0 C397.7 296.3 401.2 299.8 401.0 303.0 C400.8 306.2 398.2 311.8 396.0 314.0 C393.8 316.2 389.7 316.8 388.0 316.0 C386.3 315.2 384.8 312.0 386.0 309.0 C387.2 306.0 391.0 299.7 395.0 298.0 C399.0 296.3 403.2 296.7 410.0 299.0 C416.8 301.3 424.0 306.0 436.0 312.0 C448.0 318.0 471.3 329.3 482.0 335.0 C492.7 340.7 495.7 343.0 500.0 346.0 C504.3 349.0 505.8 350.7 508.0 353.0 C510.2 355.3 513.3 357.2 513.0 360.0 C512.7 362.8 508.8 365.5 506.0 370.0 C503.2 374.5 497.7 384.2 496.0 387.0" fill="none" stroke="#fff" stroke-opacity="0.13" stroke-width="3.8000000000000003" stroke-linecap="round" stroke-linejoin="round"/><path d="M397.0 295.0 C397.7 296.3 401.2 299.8 401.0 303.0 C400.8 306.2 398.2 311.8 396.0 314.0 C393.8 316.2 389.7 316.8 388.0 316.0 C386.3 315.2 384.8 312.0 386.0 309.0 C387.2 306.0 391.0 299.7 395.0 298.0 C399.0 296.3 403.2 296.7 410.0 299.0 C416.8 301.3 424.0 306.0 436.0 312.0 C448.0 318.0 471.3 329.3 482.0 335.0 C492.7 340.7 495.7 343.0 500.0 346.0 C504.3 349.0 505.8 350.7 508.0 353.0 C510.2 355.3 513.3 357.2 513.0 360.0 C512.7 362.8 508.8 365.5 506.0 370.0 C503.2 374.5 497.7 384.2 496.0 387.0" fill="none" stroke="#fff" stroke-opacity="0.8" stroke-width="1.6" stroke-linecap="round" stroke-linejoin="round"/><path d="M295.0 242.0 C296.2 243.3 300.2 246.7 302.0 250.0 C303.8 253.3 305.3 260.0 306.0 262.0" fill="none" stroke="#fff" stroke-opacity="0.13" stroke-width="3.6" stroke-linecap="round" stroke-linejoin="round"/><path d="M295.0 242.0 C296.2 243.3 300.2 246.7 302.0 250.0 C303.8 253.3 305.3 260.0 306.0 262.0" fill="none" stroke="#fff" stroke-opacity="0.7" stroke-width="1.4" stroke-linecap="round" stroke-linejoin="round"/><path d="M102.0 480.0 C112.0 477.5 144.5 468.3 162.0 465.0 C179.5 461.7 197.3 460.3 207.0 460.0 C216.7 459.7 214.5 459.3 220.0 463.0 C225.5 466.7 233.0 474.8 240.0 482.0 C247.0 489.2 252.8 501.2 262.0 506.0 C271.2 510.8 280.3 508.5 295.0 511.0 C309.7 513.5 326.5 516.8 350.0 521.0 C373.5 525.2 419.8 533.0 436.0 536.0 C452.2 539.0 443.5 537.5 447.0 539.0 C450.5 540.5 454.7 541.5 457.0 545.0 C459.3 548.5 460.3 557.5 461.0 560.0" fill="none" stroke="#fff" stroke-opacity="0.13" stroke-width="3.9000000000000004" stroke-linecap="round" stroke-linejoin="round"/><path d="M102.0 480.0 C112.0 477.5 144.5 468.3 162.0 465.0 C179.5 461.7 197.3 460.3 207.0 460.0 C216.7 459.7 214.5 459.3 220.0 463.0 C225.5 466.7 233.0 474.8 240.0 482.0 C247.0 489.2 252.8 501.2 262.0 506.0 C271.2 510.8 280.3 508.5 295.0 511.0 C309.7 513.5 326.5 516.8 350.0 521.0 C373.5 525.2 419.8 533.0 436.0 536.0 C452.2 539.0 443.5 537.5 447.0 539.0 C450.5 540.5 454.7 541.5 457.0 545.0 C459.3 548.5 460.3 557.5 461.0 560.0" fill="none" stroke="#fff" stroke-opacity="0.85" stroke-width="1.7" stroke-linecap="round" stroke-linejoin="round"/><path d="M265.0 507.0 C265.8 506.3 267.2 504.0 270.0 503.0 C272.8 502.0 277.8 500.8 282.0 501.0 C286.2 501.2 292.8 503.5 295.0 504.0" fill="none" stroke="#fff" stroke-opacity="0.13" stroke-width="3.5" stroke-linecap="round" stroke-linejoin="round"/><path d="M265.0 507.0 C265.8 506.3 267.2 504.0 270.0 503.0 C272.8 502.0 277.8 500.8 282.0 501.0 C286.2 501.2 292.8 503.5 295.0 504.0" fill="none" stroke="#fff" stroke-opacity="0.7" stroke-width="1.3" stroke-linecap="round" stroke-linejoin="round"/><path d="M264.0 508.0 C262.5 513.3 258.0 529.7 255.0 540.0 C252.0 550.3 247.7 561.7 246.0 570.0 C244.3 578.3 244.0 582.5 245.0 590.0 C246.0 597.5 251.7 607.5 252.0 615.0 C252.3 622.5 252.3 628.3 247.0 635.0 C241.7 641.7 229.2 647.5 220.0 655.0 C210.8 662.5 203.7 671.7 192.0 680.0 C180.3 688.3 161.2 696.3 150.0 705.0 C138.8 713.7 133.0 722.8 125.0 732.0 C117.0 741.2 105.8 755.3 102.0 760.0" fill="none" stroke="#fff" stroke-opacity="0.13" stroke-width="4.1" stroke-linecap="round" stroke-linejoin="round"/><path d="M264.0 508.0 C262.5 513.3 258.0 529.7 255.0 540.0 C252.0 550.3 247.7 561.7 246.0 570.0 C244.3 578.3 244.0 582.5 245.0 590.0 C246.0 597.5 251.7 607.5 252.0 615.0 C252.3 622.5 252.3 628.3 247.0 635.0 C241.7 641.7 229.2 647.5 220.0 655.0 C210.8 662.5 203.7 671.7 192.0 680.0 C180.3 688.3 161.2 696.3 150.0 705.0 C138.8 713.7 133.0 722.8 125.0 732.0 C117.0 741.2 105.8 755.3 102.0 760.0" fill="none" stroke="#fff" stroke-opacity="0.85" stroke-width="1.9" stroke-linecap="round" stroke-linejoin="round"/><path d="M602.0 116.0 C599.2 120.3 590.3 131.8 585.0 142.0 C579.7 152.2 573.8 169.0 570.0 177.0 C566.2 185.0 565.3 183.7 562.0 190.0 C558.7 196.3 557.3 201.0 550.0 215.0 C542.7 229.0 523.3 264.2 518.0 274.0" fill="none" stroke="#fff" stroke-opacity="0.13" stroke-width="3.9000000000000004" stroke-linecap="round" stroke-linejoin="round"/><path d="M602.0 116.0 C599.2 120.3 590.3 131.8 585.0 142.0 C579.7 152.2 573.8 169.0 570.0 177.0 C566.2 185.0 565.3 183.7 562.0 190.0 C558.7 196.3 557.3 201.0 550.0 215.0 C542.7 229.0 523.3 264.2 518.0 274.0" fill="none" stroke="#fff" stroke-opacity="0.85" stroke-width="1.7" stroke-linecap="round" stroke-linejoin="round"/><path d="M808.0 116.0 C807.5 118.7 810.0 125.5 805.0 132.0 C800.0 138.5 786.7 145.0 778.0 155.0 C769.3 165.0 759.2 183.2 753.0 192.0 C746.8 200.8 742.7 200.8 741.0 208.0 C739.3 215.2 742.3 228.0 743.0 235.0 C743.7 242.0 746.0 244.5 745.0 250.0 C744.0 255.5 740.0 262.5 737.0 268.0 C734.0 273.5 731.5 276.8 727.0 283.0 C722.5 289.2 718.7 294.3 710.0 305.0 C701.3 315.7 687.5 330.3 675.0 347.0 C662.5 363.7 644.7 390.0 635.0 405.0 C625.3 420.0 621.2 426.7 617.0 437.0 C612.8 447.3 611.5 456.5 610.0 467.0 C608.5 477.5 606.5 490.8 608.0 500.0 C609.5 509.2 617.8 513.7 619.0 522.0 C620.2 530.3 618.0 540.0 615.0 550.0 C612.0 560.0 604.3 571.2 601.0 582.0 C597.7 592.8 597.7 607.8 595.0 615.0 C592.3 622.2 595.0 622.0 585.0 625.0 C575.0 628.0 549.7 630.0 535.0 633.0 C520.3 636.0 508.3 636.8 497.0 643.0 C485.7 649.2 477.3 663.3 467.0 670.0 C456.7 676.7 442.0 682.2 435.0 683.0 C428.0 683.8 427.5 678.8 425.0 675.0 C422.5 671.2 420.3 664.2 420.0 660.0 C419.7 655.8 421.7 651.8 423.0 650.0 C424.3 648.2 427.2 649.2 428.0 649.0" fill="none" stroke="#fff" stroke-opacity="0.13" stroke-width="4.300000000000001" stroke-linecap="round" stroke-linejoin="round"/><path d="M808.0 116.0 C807.5 118.7 810.0 125.5 805.0 132.0 C800.0 138.5 786.7 145.0 778.0 155.0 C769.3 165.0 759.2 183.2 753.0 192.0 C746.8 200.8 742.7 200.8 741.0 208.0 C739.3 215.2 742.3 228.0 743.0 235.0 C743.7 242.0 746.0 244.5 745.0 250.0 C744.0 255.5 740.0 262.5 737.0 268.0 C734.0 273.5 731.5 276.8 727.0 283.0 C722.5 289.2 718.7 294.3 710.0 305.0 C701.3 315.7 687.5 330.3 675.0 347.0 C662.5 363.7 644.7 390.0 635.0 405.0 C625.3 420.0 621.2 426.7 617.0 437.0 C612.8 447.3 611.5 456.5 610.0 467.0 C608.5 477.5 606.5 490.8 608.0 500.0 C609.5 509.2 617.8 513.7 619.0 522.0 C620.2 530.3 618.0 540.0 615.0 550.0 C612.0 560.0 604.3 571.2 601.0 582.0 C597.7 592.8 597.7 607.8 595.0 615.0 C592.3 622.2 595.0 622.0 585.0 625.0 C575.0 628.0 549.7 630.0 535.0 633.0 C520.3 636.0 508.3 636.8 497.0 643.0 C485.7 649.2 477.3 663.3 467.0 670.0 C456.7 676.7 442.0 682.2 435.0 683.0 C428.0 683.8 427.5 678.8 425.0 675.0 C422.5 671.2 420.3 664.2 420.0 660.0 C419.7 655.8 421.7 651.8 423.0 650.0 C424.3 648.2 427.2 649.2 428.0 649.0" fill="none" stroke="#fff" stroke-opacity="0.88" stroke-width="2.1" stroke-linecap="round" stroke-linejoin="round"/><path d="M420.0 660.0 C420.8 664.5 423.3 680.0 425.0 687.0 C426.7 694.0 427.2 693.7 430.0 702.0 C432.8 710.3 437.0 725.3 442.0 737.0 C447.0 748.7 455.0 761.5 460.0 772.0 C465.0 782.5 466.7 788.7 472.0 800.0 C477.3 811.3 485.7 827.2 492.0 840.0 C498.3 852.8 506.5 868.7 510.0 877.0 C513.5 885.3 512.5 887.8 513.0 890.0" fill="none" stroke="#fff" stroke-opacity="0.13" stroke-width="4.2" stroke-linecap="round" stroke-linejoin="round"/><path d="M420.0 660.0 C420.8 664.5 423.3 680.0 425.0 687.0 C426.7 694.0 427.2 693.7 430.0 702.0 C432.8 710.3 437.0 725.3 442.0 737.0 C447.0 748.7 455.0 761.5 460.0 772.0 C465.0 782.5 466.7 788.7 472.0 800.0 C477.3 811.3 485.7 827.2 492.0 840.0 C498.3 852.8 506.5 868.7 510.0 877.0 C513.5 885.3 512.5 887.8 513.0 890.0" fill="none" stroke="#fff" stroke-opacity="0.85" stroke-width="2.0" stroke-linecap="round" stroke-linejoin="round"/><path d="M482.0 805.0 C484.2 795.8 491.7 765.0 495.0 750.0 C498.3 735.0 498.7 725.5 502.0 715.0 C505.3 704.5 509.5 692.7 515.0 687.0 C520.5 681.3 528.8 681.0 535.0 681.0 C541.2 681.0 545.0 682.3 552.0 687.0 C559.0 691.7 570.3 704.7 577.0 709.0 C583.7 713.3 579.8 712.2 592.0 713.0 C604.2 713.8 638.7 715.5 650.0 714.0 C661.3 712.5 657.2 710.5 660.0 704.0 C662.8 697.5 662.8 685.7 667.0 675.0 C671.2 664.3 677.8 652.5 685.0 640.0 C692.2 627.5 699.8 611.7 710.0 600.0 C720.2 588.3 736.0 578.3 746.0 570.0 C756.0 561.7 760.2 557.2 770.0 550.0 C779.8 542.8 795.8 534.5 805.0 527.0 C814.2 519.5 819.5 511.3 825.0 505.0 C830.5 498.7 835.8 491.7 838.0 489.0" fill="none" stroke="#fff" stroke-opacity="0.13" stroke-width="4.0" stroke-linecap="round" stroke-linejoin="round"/><path d="M482.0 805.0 C484.2 795.8 491.7 765.0 495.0 750.0 C498.3 735.0 498.7 725.5 502.0 715.0 C505.3 704.5 509.5 692.7 515.0 687.0 C520.5 681.3 528.8 681.0 535.0 681.0 C541.2 681.0 545.0 682.3 552.0 687.0 C559.0 691.7 570.3 704.7 577.0 709.0 C583.7 713.3 579.8 712.2 592.0 713.0 C604.2 713.8 638.7 715.5 650.0 714.0 C661.3 712.5 657.2 710.5 660.0 704.0 C662.8 697.5 662.8 685.7 667.0 675.0 C671.2 664.3 677.8 652.5 685.0 640.0 C692.2 627.5 699.8 611.7 710.0 600.0 C720.2 588.3 736.0 578.3 746.0 570.0 C756.0 561.7 760.2 557.2 770.0 550.0 C779.8 542.8 795.8 534.5 805.0 527.0 C814.2 519.5 819.5 511.3 825.0 505.0 C830.5 498.7 835.8 491.7 838.0 489.0" fill="none" stroke="#fff" stroke-opacity="0.85" stroke-width="1.8" stroke-linecap="round" stroke-linejoin="round"/><path d="M535.0 681.0 C536.7 684.2 543.2 691.0 545.0 700.0 C546.8 709.0 546.0 725.0 546.0 735.0 C546.0 745.0 545.2 755.8 545.0 760.0" fill="none" stroke="#fff" stroke-opacity="0.13" stroke-width="3.4000000000000004" stroke-linecap="round" stroke-linejoin="round"/><path d="M535.0 681.0 C536.7 684.2 543.2 691.0 545.0 700.0 C546.8 709.0 546.0 725.0 546.0 735.0 C546.0 745.0 545.2 755.8 545.0 760.0" fill="none" stroke="#fff" stroke-opacity="0.55" stroke-width="1.2" stroke-linecap="round" stroke-linejoin="round"/><path d="M656.0 335.0 C663.3 339.2 685.0 351.3 700.0 360.0 C715.0 368.7 737.3 382.0 746.0 387.0 C754.7 392.0 750.0 387.8 752.0 390.0 C754.0 392.2 756.5 395.0 758.0 400.0 C759.5 405.0 760.5 416.7 761.0 420.0" fill="none" stroke="#fff" stroke-opacity="0.13" stroke-width="4.5" stroke-linecap="round" stroke-linejoin="round"/><path d="M656.0 335.0 C663.3 339.2 685.0 351.3 700.0 360.0 C715.0 368.7 737.3 382.0 746.0 387.0 C754.7 392.0 750.0 387.8 752.0 390.0 C754.0 392.2 756.5 395.0 758.0 400.0 C759.5 405.0 760.5 416.7 761.0 420.0" fill="none" stroke="#fff" stroke-opacity="0.92" stroke-width="2.3" stroke-linecap="round" stroke-linejoin="round"/><path d="M627.0 407.0 C633.3 411.7 653.3 428.3 665.0 435.0 C676.7 441.7 687.8 444.7 697.0 447.0 C706.2 449.3 706.2 445.2 720.0 449.0 C733.8 452.8 760.3 463.3 780.0 470.0 C799.7 476.7 818.8 487.8 838.0 489.0 C857.2 490.2 877.2 482.7 895.0 477.0 C912.8 471.3 934.2 462.0 945.0 455.0 C955.8 448.0 957.5 441.3 960.0 435.0 C962.5 428.7 963.0 428.7 960.0 417.0 C957.0 405.3 947.0 378.3 942.0 365.0 C937.0 351.7 933.3 347.0 930.0 337.0 C926.7 327.0 923.3 310.3 922.0 305.0" fill="none" stroke="#fff" stroke-opacity="0.13" stroke-width="4.1" stroke-linecap="round" stroke-linejoin="round"/><path d="M627.0 407.0 C633.3 411.7 653.3 428.3 665.0 435.0 C676.7 441.7 687.8 444.7 697.0 447.0 C706.2 449.3 706.2 445.2 720.0 449.0 C733.8 452.8 760.3 463.3 780.0 470.0 C799.7 476.7 818.8 487.8 838.0 489.0 C857.2 490.2 877.2 482.7 895.0 477.0 C912.8 471.3 934.2 462.0 945.0 455.0 C955.8 448.0 957.5 441.3 960.0 435.0 C962.5 428.7 963.0 428.7 960.0 417.0 C957.0 405.3 947.0 378.3 942.0 365.0 C937.0 351.7 933.3 347.0 930.0 337.0 C926.7 327.0 923.3 310.3 922.0 305.0" fill="none" stroke="#fff" stroke-opacity="0.88" stroke-width="1.9" stroke-linecap="round" stroke-linejoin="round"/><path d="M838.0 489.0 C843.3 492.0 858.5 500.2 870.0 507.0 C881.5 513.8 894.5 524.7 907.0 530.0 C919.5 535.3 930.3 539.0 945.0 539.0 C959.7 539.0 981.5 532.8 995.0 530.0 C1008.5 527.2 1020.8 523.3 1026.0 522.0" fill="none" stroke="#fff" stroke-opacity="0.13" stroke-width="4.2" stroke-linecap="round" stroke-linejoin="round"/><path d="M838.0 489.0 C843.3 492.0 858.5 500.2 870.0 507.0 C881.5 513.8 894.5 524.7 907.0 530.0 C919.5 535.3 930.3 539.0 945.0 539.0 C959.7 539.0 981.5 532.8 995.0 530.0 C1008.5 527.2 1020.8 523.3 1026.0 522.0" fill="none" stroke="#fff" stroke-opacity="0.88" stroke-width="2.0" stroke-linecap="round" stroke-linejoin="round"/><path d="M838.0 489.0 C835.8 491.7 830.2 498.2 825.0 505.0 C819.8 511.8 812.0 523.3 807.0 530.0 C802.0 536.7 797.0 542.5 795.0 545.0" fill="none" stroke="#fff" stroke-opacity="0.13" stroke-width="3.8000000000000003" stroke-linecap="round" stroke-linejoin="round"/><path d="M838.0 489.0 C835.8 491.7 830.2 498.2 825.0 505.0 C819.8 511.8 812.0 523.3 807.0 530.0 C802.0 536.7 797.0 542.5 795.0 545.0" fill="none" stroke="#fff" stroke-opacity="0.8" stroke-width="1.6" stroke-linecap="round" stroke-linejoin="round"/><path d="M851.0 115.0 C847.5 120.8 837.7 137.7 830.0 150.0 C822.3 162.3 808.3 179.5 805.0 189.0 C801.7 198.5 804.8 195.8 810.0 207.0 C815.2 218.2 827.8 244.2 836.0 256.0 C844.2 267.8 847.8 272.7 859.0 278.0 C870.2 283.3 892.5 283.5 903.0 288.0 C913.5 292.5 918.8 302.2 922.0 305.0" fill="none" stroke="#fff" stroke-opacity="0.13" stroke-width="4.1" stroke-linecap="round" stroke-linejoin="round"/><path d="M851.0 115.0 C847.5 120.8 837.7 137.7 830.0 150.0 C822.3 162.3 808.3 179.5 805.0 189.0 C801.7 198.5 804.8 195.8 810.0 207.0 C815.2 218.2 827.8 244.2 836.0 256.0 C844.2 267.8 847.8 272.7 859.0 278.0 C870.2 283.3 892.5 283.5 903.0 288.0 C913.5 292.5 918.8 302.2 922.0 305.0" fill="none" stroke="#fff" stroke-opacity="0.88" stroke-width="1.9" stroke-linecap="round" stroke-linejoin="round"/><path d="M903.0 288.0 C910.0 289.7 934.7 295.5 945.0 298.0 C955.3 300.5 955.8 304.0 965.0 303.0 C974.2 302.0 989.8 295.7 1000.0 292.0 C1010.2 288.3 1021.7 282.8 1026.0 281.0" fill="none" stroke="#fff" stroke-opacity="0.13" stroke-width="4.1" stroke-linecap="round" stroke-linejoin="round"/><path d="M903.0 288.0 C910.0 289.7 934.7 295.5 945.0 298.0 C955.3 300.5 955.8 304.0 965.0 303.0 C974.2 302.0 989.8 295.7 1000.0 292.0 C1010.2 288.3 1021.7 282.8 1026.0 281.0" fill="none" stroke="#fff" stroke-opacity="0.85" stroke-width="1.9" stroke-linecap="round" stroke-linejoin="round"/><path d="M922.0 305.0 C925.0 303.5 933.3 296.0 940.0 296.0 C946.7 296.0 961.2 298.2 962.0 305.0 C962.8 311.8 949.2 329.2 945.0 337.0 C940.8 344.8 938.3 349.5 937.0 352.0" fill="none" stroke="#fff" stroke-opacity="0.13" stroke-width="3.5" stroke-linecap="round" stroke-linejoin="round"/><path d="M922.0 305.0 C925.0 303.5 933.3 296.0 940.0 296.0 C946.7 296.0 961.2 298.2 962.0 305.0 C962.8 311.8 949.2 329.2 945.0 337.0 C940.8 344.8 938.3 349.5 937.0 352.0" fill="none" stroke="#fff" stroke-opacity="0.7" stroke-width="1.3" stroke-linecap="round" stroke-linejoin="round"/><path d="M962.0 305.0 L1026.0 316.0" fill="none" stroke="#fff" stroke-opacity="0.13" stroke-width="3.3000000000000003" stroke-linecap="round" stroke-linejoin="round"/><path d="M962.0 305.0 L1026.0 316.0" fill="none" stroke="#fff" stroke-opacity="0.55" stroke-width="1.1" stroke-linecap="round" stroke-linejoin="round"/><path d="M555.0 587.0 C564.2 590.7 591.7 601.8 610.0 609.0 C628.3 616.2 652.3 625.8 665.0 630.0 C677.7 634.2 682.5 633.3 686.0 634.0" fill="none" stroke="#fff" stroke-opacity="0.13" stroke-width="4.5" stroke-linecap="round" stroke-linejoin="round"/><path d="M555.0 587.0 C564.2 590.7 591.7 601.8 610.0 609.0 C628.3 616.2 652.3 625.8 665.0 630.0 C677.7 634.2 682.5 633.3 686.0 634.0" fill="none" stroke="#fff" stroke-opacity="0.92" stroke-width="2.3" stroke-linecap="round" stroke-linejoin="round"/><path d="M457.0 545.0 C457.7 546.3 460.2 550.2 461.0 553.0 C461.8 555.8 462.3 559.8 462.0 562.0 C461.7 564.2 459.5 565.3 459.0 566.0" fill="none" stroke="#fff" stroke-opacity="0.13" stroke-width="3.3000000000000003" stroke-linecap="round" stroke-linejoin="round"/><path d="M457.0 545.0 C457.7 546.3 460.2 550.2 461.0 553.0 C461.8 555.8 462.3 559.8 462.0 562.0 C461.7 564.2 459.5 565.3 459.0 566.0" fill="none" stroke="#fff" stroke-opacity="0.7" stroke-width="1.1" stroke-linecap="round" stroke-linejoin="round"/><path d="M948.0 818.0 C948.7 814.2 949.2 802.7 952.0 795.0 C954.8 787.3 960.3 779.8 965.0 772.0 C969.7 764.2 975.0 753.3 980.0 748.0 C985.0 742.7 987.3 742.2 995.0 740.0 C1002.7 737.8 1020.8 735.8 1026.0 735.0" fill="none" stroke="#fff" stroke-opacity="0.13" stroke-width="3.9000000000000004" stroke-linecap="round" stroke-linejoin="round"/><path d="M948.0 818.0 C948.7 814.2 949.2 802.7 952.0 795.0 C954.8 787.3 960.3 779.8 965.0 772.0 C969.7 764.2 975.0 753.3 980.0 748.0 C985.0 742.7 987.3 742.2 995.0 740.0 C1002.7 737.8 1020.8 735.8 1026.0 735.0" fill="none" stroke="#fff" stroke-opacity="0.85" stroke-width="1.7" stroke-linecap="round" stroke-linejoin="round"/><path d="M778.0 240.0 C776.5 241.7 769.8 246.5 769.0 250.0 C768.2 253.5 771.2 257.2 773.0 261.0 C774.8 264.8 781.2 268.0 780.0 273.0 C778.8 278.0 771.7 284.8 766.0 291.0 C760.3 297.2 752.8 302.2 746.0 310.0 C739.2 317.8 731.3 329.2 725.0 338.0 C718.7 346.8 713.2 355.0 708.0 363.0 C702.8 371.0 697.5 379.0 694.0 386.0 C690.5 393.0 690.7 398.0 687.0 405.0 C683.3 412.0 676.2 422.7 672.0 428.0 C667.8 433.3 664.2 428.3 662.0 437.0 C659.8 445.7 659.0 469.5 659.0 480.0 C659.0 490.5 661.5 496.7 662.0 500.0" fill="none" stroke="#fff" stroke-opacity="0.13" stroke-width="3.2" stroke-linecap="round" stroke-linejoin="round"/><path d="M778.0 240.0 C776.5 241.7 769.8 246.5 769.0 250.0 C768.2 253.5 771.2 257.2 773.0 261.0 C774.8 264.8 781.2 268.0 780.0 273.0 C778.8 278.0 771.7 284.8 766.0 291.0 C760.3 297.2 752.8 302.2 746.0 310.0 C739.2 317.8 731.3 329.2 725.0 338.0 C718.7 346.8 713.2 355.0 708.0 363.0 C702.8 371.0 697.5 379.0 694.0 386.0 C690.5 393.0 690.7 398.0 687.0 405.0 C683.3 412.0 676.2 422.7 672.0 428.0 C667.8 433.3 664.2 428.3 662.0 437.0 C659.8 445.7 659.0 469.5 659.0 480.0 C659.0 490.5 661.5 496.7 662.0 500.0" fill="none" stroke="#fff" stroke-opacity="0.5" stroke-width="1.0" stroke-linecap="round" stroke-linejoin="round"/><path d="M562.0 116.0 L505.0 220.0" fill="none" stroke="#fff" stroke-opacity="0.6" stroke-width="1" stroke-linecap="round" stroke-linejoin="round"/><path d="M505.0 220.0 C499.2 231.7 480.5 269.2 470.0 290.0 C459.5 310.8 450.0 323.3 442.0 345.0 C434.0 366.7 426.3 404.2 422.0 420.0 C417.7 435.8 419.7 422.2 416.0 440.0 C412.3 457.8 404.8 497.8 400.0 527.0 C395.2 556.2 390.2 592.8 387.0 615.0 C383.8 637.2 382.7 647.5 381.0 660.0 C379.3 672.5 380.5 679.2 377.0 690.0 C373.5 700.8 366.0 712.2 360.0 725.0 C354.0 737.8 344.2 760.0 341.0 767.0" fill="none" stroke="#fff" stroke-opacity="0.6" stroke-width="1.1" stroke-linecap="round" stroke-linejoin="round" stroke-dasharray="3.2 2.2" stroke-linecap="butt"/><path d="M341.0 767.0 C352.0 774.2 391.2 806.2 407.0 810.0 C422.8 813.8 429.3 794.2 436.0 790.0 C442.7 785.8 443.5 788.3 447.0 785.0 C450.5 781.7 452.0 775.8 457.0 770.0 C462.0 764.2 471.2 758.3 477.0 750.0 C482.8 741.7 487.3 731.3 492.0 720.0 C496.7 708.7 500.8 691.2 505.0 682.0 C509.2 672.8 509.5 668.3 517.0 665.0 C524.5 661.7 538.7 663.3 550.0 662.0 C561.3 660.7 573.8 660.8 585.0 657.0 C596.2 653.2 609.5 640.2 617.0 639.0 C624.5 637.8 627.8 648.2 630.0 650.0" fill="none" stroke="#fff" stroke-opacity="0.6" stroke-width="1.1" stroke-linecap="round" stroke-linejoin="round" stroke-dasharray="3.2 2.2" stroke-linecap="butt"/><path d="M662.0 500.0 C662.5 507.5 665.8 534.2 665.0 545.0 C664.2 555.8 658.3 561.7 657.0 565.0" fill="none" stroke="#fff" stroke-opacity="0.6" stroke-width="1.1" stroke-linecap="round" stroke-linejoin="round" stroke-dasharray="3.2 2.2" stroke-linecap="butt"/><path d="M660.0 466.0 C665.0 464.8 682.5 459.7 690.0 459.0 C697.5 458.3 700.0 460.7 705.0 462.0 C710.0 463.3 711.3 462.3 720.0 467.0 C728.7 471.7 746.7 481.7 757.0 490.0 C767.3 498.3 774.0 511.2 782.0 517.0 C790.0 522.8 798.7 519.5 805.0 525.0 C811.3 530.5 815.5 541.7 820.0 550.0 C824.5 558.3 830.3 566.7 832.0 575.0 C833.7 583.3 828.3 590.0 830.0 600.0 C831.7 610.0 833.3 622.5 842.0 635.0 C850.7 647.5 874.0 666.7 882.0 675.0 C890.0 683.3 889.5 682.2 890.0 685.0 C890.5 687.8 880.5 686.7 885.0 692.0 C889.5 697.3 911.2 709.8 917.0 717.0 C922.8 724.2 917.5 732.0 920.0 735.0 C922.5 738.0 930.0 735.0 932.0 735.0" fill="none" stroke="#fff" stroke-opacity="0.6" stroke-width="1.1" stroke-linecap="round" stroke-linejoin="round" stroke-dasharray="3.2 2.2" stroke-linecap="butt"/><path d="M860.0 115.0 C863.7 117.0 876.8 119.8 882.0 127.0 C887.2 134.2 893.2 150.0 891.0 158.0 C888.8 166.0 876.0 167.2 869.0 175.0 C862.0 182.8 856.8 196.3 849.0 205.0 C841.2 213.7 827.8 221.3 822.0 227.0 C816.2 232.7 815.3 237.0 814.0 239.0" fill="none" stroke="#fff" stroke-opacity="0.6" stroke-width="1.1" stroke-linecap="round" stroke-linejoin="round" stroke-dasharray="3.2 2.2" stroke-linecap="butt"/><path d="M882.0 127.0 C885.0 128.2 883.9 128.6 900.0 134.5 C916.1 140.4 965.6 158.0 978.7 162.7" fill="none" stroke="#fff" stroke-opacity="0.6" stroke-width="1.1" stroke-linecap="round" stroke-linejoin="round" stroke-dasharray="3.2 2.2" stroke-linecap="butt"/><path d="M978.7 162.7 L982.0 179.0" fill="none" stroke="#fff" stroke-opacity="0.6" stroke-width="1.1" stroke-linecap="round" stroke-linejoin="round" stroke-dasharray="3.2 2.2" stroke-linecap="butt"/><path d="M982.0 179.0 L1026.0 187.0" fill="none" stroke="#fff" stroke-opacity="0.6" stroke-width="1.1" stroke-linecap="round" stroke-linejoin="round" stroke-dasharray="3.2 2.2" stroke-linecap="butt"/><path d="M341.0 767.0 L285.0 890.0" fill="none" stroke="#fff" stroke-opacity="0.6" stroke-width="1" stroke-linecap="round" stroke-linejoin="round"/><g fill="none"><g stroke="#e23f7a" stroke-opacity=".3" stroke-width="2.9"><circle cx="614.0" cy="156.5" r="19.6"/><circle cx="604.5" cy="192.0" r="19.6"/><circle cx="583.8" cy="215.0" r="19.6"/><circle cx="582.5" cy="230.0" r="19.6"/><circle cx="586.0" cy="239.0" r="19.6"/><circle cx="574.8" cy="245.8" r="19.6"/><circle cx="672.0" cy="229.5" r="19.6"/><circle cx="720.0" cy="174.5" r="19.6"/><circle cx="733.8" cy="127.0" r="19.6"/><circle cx="658.5" cy="124.0" r="19.6"/><circle cx="723.8" cy="215.0" r="19.6"/><circle cx="728.8" cy="224.8" r="19.6"/><circle cx="737.5" cy="202.0" r="19.6"/><circle cx="731.8" cy="244.2" r="19.6"/><circle cx="690.5" cy="260.2" r="19.6"/><circle cx="690.5" cy="273.5" r="19.6"/><circle cx="698.8" cy="279.8" r="19.6"/><circle cx="674.5" cy="292.8" r="19.6"/><circle cx="679.5" cy="307.8" r="19.6"/><circle cx="679.5" cy="317.0" r="19.6"/><circle cx="666.2" cy="331.5" r="19.6"/><circle cx="622.5" cy="323.5" r="19.6"/><circle cx="598.0" cy="316.0" r="19.6"/><circle cx="565.0" cy="302.8" r="19.6"/><circle cx="526.8" cy="319.0" r="19.6"/><circle cx="537.5" cy="325.2" r="19.6"/><circle cx="853.2" cy="263.8" r="19.6"/><circle cx="832.2" cy="278.5" r="19.6"/><circle cx="849.5" cy="299.8" r="19.6"/><circle cx="821.2" cy="307.5" r="19.6"/><circle cx="802.0" cy="335.2" r="19.6"/><circle cx="777.0" cy="357.8" r="19.6"/><circle cx="803.0" cy="371.0" r="19.6"/><circle cx="798.0" cy="431.5" r="19.6"/><circle cx="862.0" cy="449.0" r="19.6"/><circle cx="965.8" cy="455.5" r="19.6"/><circle cx="838.5" cy="522.2" r="19.6"/><circle cx="1035.5" cy="379.0" r="19.6"/><circle cx="534.2" cy="351.5" r="19.6"/><circle cx="530.8" cy="356.5" r="19.6"/><circle cx="528.0" cy="361.5" r="19.6"/><circle cx="531.8" cy="380.8" r="19.6"/><circle cx="581.0" cy="389.0" r="19.6"/><circle cx="586.0" cy="413.2" r="19.6"/><circle cx="594.2" cy="411.5" r="19.6"/><circle cx="610.5" cy="418.5" r="19.6"/><circle cx="602.0" cy="424.5" r="19.6"/><circle cx="577.5" cy="429.0" r="19.6"/><circle cx="589.2" cy="445.8" r="19.6"/><circle cx="591.0" cy="444.0" r="19.6"/><circle cx="579.2" cy="447.8" r="19.6"/><circle cx="503.2" cy="446.0" r="19.6"/><circle cx="513.2" cy="475.0" r="19.6"/><circle cx="563.8" cy="470.2" r="19.6"/><circle cx="545.0" cy="497.8" r="19.6"/><circle cx="521.8" cy="509.0" r="19.6"/><circle cx="493.2" cy="522.2" r="19.6"/><circle cx="590.5" cy="521.0" r="19.6"/><circle cx="552.5" cy="533.5" r="19.6"/><circle cx="627.0" cy="342.0" r="19.6"/><circle cx="640.0" cy="343.5" r="19.6"/><circle cx="647.5" cy="356.5" r="19.6"/><circle cx="572.5" cy="546.5" r="19.6"/><circle cx="560.0" cy="563.2" r="19.6"/><circle cx="544.2" cy="579.0" r="19.6"/><circle cx="570.8" cy="582.2" r="19.6"/><circle cx="458.8" cy="560.8" r="19.6"/><circle cx="467.8" cy="606.8" r="19.6"/><circle cx="683.8" cy="577.2" r="19.6"/><circle cx="660.0" cy="606.5" r="19.6"/><circle cx="685.8" cy="614.8" r="19.6"/><circle cx="714.2" cy="647.2" r="19.6"/><circle cx="757.5" cy="637.2" r="19.6"/><circle cx="510.0" cy="697.8" r="19.6"/><circle cx="613.0" cy="720.5" r="19.6"/><circle cx="688.0" cy="727.0" r="19.6"/><circle cx="530.8" cy="735.2" r="19.6"/><circle cx="507.0" cy="751.5" r="19.6"/><circle cx="670.0" cy="739.8" r="19.6"/><circle cx="703.0" cy="752.8" r="19.6"/><circle cx="636.2" cy="760.8" r="19.6"/><circle cx="637.5" cy="772.5" r="19.6"/><circle cx="648.8" cy="784.0" r="19.6"/><circle cx="716.8" cy="782.2" r="19.6"/><circle cx="674.5" cy="831.0" r="19.6"/><circle cx="677.5" cy="827.8" r="19.6"/><circle cx="681.2" cy="834.0" r="19.6"/><circle cx="683.2" cy="833.5" r="19.6"/><circle cx="642.5" cy="839.0" r="19.6"/><circle cx="721.2" cy="835.8" r="19.6"/><circle cx="717.5" cy="840.8" r="19.6"/><circle cx="675.8" cy="869.8" r="19.6"/><circle cx="514.5" cy="843.5" r="19.6"/><circle cx="553.8" cy="855.2" r="19.6"/><circle cx="612.0" cy="855.5" r="19.6"/><circle cx="585.0" cy="867.8" r="19.6"/><circle cx="576.2" cy="884.8" r="19.6"/><circle cx="870.5" cy="761.0" r="19.6"/><circle cx="961.8" cy="798.5" r="19.6"/><circle cx="1008.8" cy="804.8" r="19.6"/><circle cx="823.8" cy="818.0" r="19.6"/><circle cx="803.0" cy="845.8" r="19.6"/><circle cx="750.0" cy="827.8" r="19.6"/><circle cx="838.2" cy="878.2" r="19.6"/><circle cx="629.6" cy="113.5" r="19.6"/><circle cx="667.0" cy="107.0" r="19.6"/><circle cx="696.0" cy="103.0" r="19.6"/><circle cx="749.0" cy="108.0" r="19.6"/><circle cx="758.0" cy="112.0" r="19.6"/><circle cx="770.0" cy="103.0" r="19.6"/><circle cx="850.0" cy="299.0" r="19.6"/><circle cx="679.0" cy="831.5" r="19.6"/><circle cx="679.0" cy="831.5" r="19.6"/></g><g stroke="#f78db3" stroke-opacity=".95" stroke-width="1.25" stroke-dasharray="3.6 2.2"><circle cx="614.0" cy="156.5" r="19.6"/><circle cx="604.5" cy="192.0" r="19.6"/><circle cx="583.8" cy="215.0" r="19.6"/><circle cx="582.5" cy="230.0" r="19.6"/><circle cx="586.0" cy="239.0" r="19.6"/><circle cx="574.8" cy="245.8" r="19.6"/><circle cx="672.0" cy="229.5" r="19.6"/><circle cx="720.0" cy="174.5" r="19.6"/><circle cx="733.8" cy="127.0" r="19.6"/><circle cx="658.5" cy="124.0" r="19.6"/><circle cx="723.8" cy="215.0" r="19.6"/><circle cx="728.8" cy="224.8" r="19.6"/><circle cx="737.5" cy="202.0" r="19.6"/><circle cx="731.8" cy="244.2" r="19.6"/><circle cx="690.5" cy="260.2" r="19.6"/><circle cx="690.5" cy="273.5" r="19.6"/><circle cx="698.8" cy="279.8" r="19.6"/><circle cx="674.5" cy="292.8" r="19.6"/><circle cx="679.5" cy="307.8" r="19.6"/><circle cx="679.5" cy="317.0" r="19.6"/><circle cx="666.2" cy="331.5" r="19.6"/><circle cx="622.5" cy="323.5" r="19.6"/><circle cx="598.0" cy="316.0" r="19.6"/><circle cx="565.0" cy="302.8" r="19.6"/><circle cx="526.8" cy="319.0" r="19.6"/><circle cx="537.5" cy="325.2" r="19.6"/><circle cx="853.2" cy="263.8" r="19.6"/><circle cx="832.2" cy="278.5" r="19.6"/><circle cx="849.5" cy="299.8" r="19.6"/><circle cx="821.2" cy="307.5" r="19.6"/><circle cx="802.0" cy="335.2" r="19.6"/><circle cx="777.0" cy="357.8" r="19.6"/><circle cx="803.0" cy="371.0" r="19.6"/><circle cx="798.0" cy="431.5" r="19.6"/><circle cx="862.0" cy="449.0" r="19.6"/><circle cx="965.8" cy="455.5" r="19.6"/><circle cx="838.5" cy="522.2" r="19.6"/><circle cx="1035.5" cy="379.0" r="19.6"/><circle cx="534.2" cy="351.5" r="19.6"/><circle cx="530.8" cy="356.5" r="19.6"/><circle cx="528.0" cy="361.5" r="19.6"/><circle cx="531.8" cy="380.8" r="19.6"/><circle cx="581.0" cy="389.0" r="19.6"/><circle cx="586.0" cy="413.2" r="19.6"/><circle cx="594.2" cy="411.5" r="19.6"/><circle cx="610.5" cy="418.5" r="19.6"/><circle cx="602.0" cy="424.5" r="19.6"/><circle cx="577.5" cy="429.0" r="19.6"/><circle cx="589.2" cy="445.8" r="19.6"/><circle cx="591.0" cy="444.0" r="19.6"/><circle cx="579.2" cy="447.8" r="19.6"/><circle cx="503.2" cy="446.0" r="19.6"/><circle cx="513.2" cy="475.0" r="19.6"/><circle cx="563.8" cy="470.2" r="19.6"/><circle cx="545.0" cy="497.8" r="19.6"/><circle cx="521.8" cy="509.0" r="19.6"/><circle cx="493.2" cy="522.2" r="19.6"/><circle cx="590.5" cy="521.0" r="19.6"/><circle cx="552.5" cy="533.5" r="19.6"/><circle cx="627.0" cy="342.0" r="19.6"/><circle cx="640.0" cy="343.5" r="19.6"/><circle cx="647.5" cy="356.5" r="19.6"/><circle cx="572.5" cy="546.5" r="19.6"/><circle cx="560.0" cy="563.2" r="19.6"/><circle cx="544.2" cy="579.0" r="19.6"/><circle cx="570.8" cy="582.2" r="19.6"/><circle cx="458.8" cy="560.8" r="19.6"/><circle cx="467.8" cy="606.8" r="19.6"/><circle cx="683.8" cy="577.2" r="19.6"/><circle cx="660.0" cy="606.5" r="19.6"/><circle cx="685.8" cy="614.8" r="19.6"/><circle cx="714.2" cy="647.2" r="19.6"/><circle cx="757.5" cy="637.2" r="19.6"/><circle cx="510.0" cy="697.8" r="19.6"/><circle cx="613.0" cy="720.5" r="19.6"/><circle cx="688.0" cy="727.0" r="19.6"/><circle cx="530.8" cy="735.2" r="19.6"/><circle cx="507.0" cy="751.5" r="19.6"/><circle cx="670.0" cy="739.8" r="19.6"/><circle cx="703.0" cy="752.8" r="19.6"/><circle cx="636.2" cy="760.8" r="19.6"/><circle cx="637.5" cy="772.5" r="19.6"/><circle cx="648.8" cy="784.0" r="19.6"/><circle cx="716.8" cy="782.2" r="19.6"/><circle cx="674.5" cy="831.0" r="19.6"/><circle cx="677.5" cy="827.8" r="19.6"/><circle cx="681.2" cy="834.0" r="19.6"/><circle cx="683.2" cy="833.5" r="19.6"/><circle cx="642.5" cy="839.0" r="19.6"/><circle cx="721.2" cy="835.8" r="19.6"/><circle cx="717.5" cy="840.8" r="19.6"/><circle cx="675.8" cy="869.8" r="19.6"/><circle cx="514.5" cy="843.5" r="19.6"/><circle cx="553.8" cy="855.2" r="19.6"/><circle cx="612.0" cy="855.5" r="19.6"/><circle cx="585.0" cy="867.8" r="19.6"/><circle cx="576.2" cy="884.8" r="19.6"/><circle cx="870.5" cy="761.0" r="19.6"/><circle cx="961.8" cy="798.5" r="19.6"/><circle cx="1008.8" cy="804.8" r="19.6"/><circle cx="823.8" cy="818.0" r="19.6"/><circle cx="803.0" cy="845.8" r="19.6"/><circle cx="750.0" cy="827.8" r="19.6"/><circle cx="838.2" cy="878.2" r="19.6"/><circle cx="629.6" cy="113.5" r="19.6"/><circle cx="667.0" cy="107.0" r="19.6"/><circle cx="696.0" cy="103.0" r="19.6"/><circle cx="749.0" cy="108.0" r="19.6"/><circle cx="758.0" cy="112.0" r="19.6"/><circle cx="770.0" cy="103.0" r="19.6"/><circle cx="850.0" cy="299.0" r="19.6"/><circle cx="679.0" cy="831.5" r="19.6"/><circle cx="679.0" cy="831.5" r="19.6"/></g></g><g clip-path="url(#c_teal)"><polygon points="656.5,565.0 662.7,572.8 676.7,581.6 683.7,579.0 691.6,586.0 702.2,575.5 706.2,591.3 707.0,601.0 731.0,583.4 733.0,608.0 753.0,608.8 757.5,617.6 783.0,612.3 786.5,627.3 793.8,644.8 788.0,648.0 791.7,671.0 755.7,685.0 662.7,701.0 659.0,688.7 645.0,671.0 633.7,655.4 627.6,634.3 632.0,616.7 645.0,581.6" fill="#2db5a0"/><polygon points="632.0,594.0 680.0,590.0 684.0,629.0 628.0,634.0" fill="#3ac2a6"/><polygon points="706.0,585.0 733.0,583.0 733.0,627.0 708.0,629.0" fill="#2aa39b"/><polygon points="733.0,627.0 757.0,618.0 758.0,675.0 735.0,680.0" fill="#3bc4a7"/><polygon points="757.0,617.0 795.0,610.0 795.0,672.0 758.0,686.0" fill="#2ba69c"/><polygon points="640.0,640.0 700.0,652.0 712.0,684.0 700.0,700.0 652.0,702.0" fill="#39c0a5"/><polygon points="646.0,641.0 700.0,650.0 712.0,676.0 690.0,668.0 660.0,655.0" fill="#2a9f9a"/><polygon points="715.0,638.0 733.0,636.0 734.0,664.0 716.0,662.0" fill="#2a9f9a"/><polygon points="711.8,683.4 725.9,671.0 743.4,683.4 733.0,690.0" fill="#2b85a0"/><polygon points="625.0,655.0 660.0,690.0 664.0,703.0 640.0,700.0 620.0,660.0" fill="#2a9c9a"/><polygon points="656.5,565.0 662.7,572.8 676.7,581.6 683.7,579.0 691.6,586.0 702.2,575.5 706.2,591.3 707.0,601.0 731.0,583.4 733.0,608.0 753.0,608.8 757.5,617.6 783.0,612.3 786.5,627.3 793.8,644.8 788.0,648.0 791.7,671.0 755.7,685.0 662.7,701.0 659.0,688.7 645.0,671.0 633.7,655.4 627.6,634.3 632.0,616.7 645.0,581.6" fill="url(#p_teal)"/><g fill="none" stroke="#ecd6ea" stroke-opacity=".8" stroke-width="1.6" stroke-dasharray="3.6 2.2"><circle cx="614.0" cy="156.5" r="19.6"/><circle cx="604.5" cy="192.0" r="19.6"/><circle cx="583.8" cy="215.0" r="19.6"/><circle cx="582.5" cy="230.0" r="19.6"/><circle cx="586.0" cy="239.0" r="19.6"/><circle cx="574.8" cy="245.8" r="19.6"/><circle cx="672.0" cy="229.5" r="19.6"/><circle cx="720.0" cy="174.5" r="19.6"/><circle cx="733.8" cy="127.0" r="19.6"/><circle cx="658.5" cy="124.0" r="19.6"/><circle cx="723.8" cy="215.0" r="19.6"/><circle cx="728.8" cy="224.8" r="19.6"/><circle cx="737.5" cy="202.0" r="19.6"/><circle cx="731.8" cy="244.2" r="19.6"/><circle cx="690.5" cy="260.2" r="19.6"/><circle cx="690.5" cy="273.5" r="19.6"/><circle cx="698.8" cy="279.8" r="19.6"/><circle cx="674.5" cy="292.8" r="19.6"/><circle cx="679.5" cy="307.8" r="19.6"/><circle cx="679.5" cy="317.0" r="19.6"/><circle cx="666.2" cy="331.5" r="19.6"/><circle cx="622.5" cy="323.5" r="19.6"/><circle cx="598.0" cy="316.0" r="19.6"/><circle cx="565.0" cy="302.8" r="19.6"/><circle cx="526.8" cy="319.0" r="19.6"/><circle cx="537.5" cy="325.2" r="19.6"/><circle cx="853.2" cy="263.8" r="19.6"/><circle cx="832.2" cy="278.5" r="19.6"/><circle cx="849.5" cy="299.8" r="19.6"/><circle cx="821.2" cy="307.5" r="19.6"/><circle cx="802.0" cy="335.2" r="19.6"/><circle cx="777.0" cy="357.8" r="19.6"/><circle cx="803.0" cy="371.0" r="19.6"/><circle cx="798.0" cy="431.5" r="19.6"/><circle cx="862.0" cy="449.0" r="19.6"/><circle cx="965.8" cy="455.5" r="19.6"/><circle cx="838.5" cy="522.2" r="19.6"/><circle cx="1035.5" cy="379.0" r="19.6"/><circle cx="534.2" cy="351.5" r="19.6"/><circle cx="530.8" cy="356.5" r="19.6"/><circle cx="528.0" cy="361.5" r="19.6"/><circle cx="531.8" cy="380.8" r="19.6"/><circle cx="581.0" cy="389.0" r="19.6"/><circle cx="586.0" cy="413.2" r="19.6"/><circle cx="594.2" cy="411.5" r="19.6"/><circle cx="610.5" cy="418.5" r="19.6"/><circle cx="602.0" cy="424.5" r="19.6"/><circle cx="577.5" cy="429.0" r="19.6"/><circle cx="589.2" cy="445.8" r="19.6"/><circle cx="591.0" cy="444.0" r="19.6"/><circle cx="579.2" cy="447.8" r="19.6"/><circle cx="503.2" cy="446.0" r="19.6"/><circle cx="513.2" cy="475.0" r="19.6"/><circle cx="563.8" cy="470.2" r="19.6"/><circle cx="545.0" cy="497.8" r="19.6"/><circle cx="521.8" cy="509.0" r="19.6"/><circle cx="493.2" cy="522.2" r="19.6"/><circle cx="590.5" cy="521.0" r="19.6"/><circle cx="552.5" cy="533.5" r="19.6"/><circle cx="627.0" cy="342.0" r="19.6"/><circle cx="640.0" cy="343.5" r="19.6"/><circle cx="647.5" cy="356.5" r="19.6"/><circle cx="572.5" cy="546.5" r="19.6"/><circle cx="560.0" cy="563.2" r="19.6"/><circle cx="544.2" cy="579.0" r="19.6"/><circle cx="570.8" cy="582.2" r="19.6"/><circle cx="458.8" cy="560.8" r="19.6"/><circle cx="467.8" cy="606.8" r="19.6"/><circle cx="683.8" cy="577.2" r="19.6"/><circle cx="660.0" cy="606.5" r="19.6"/><circle cx="685.8" cy="614.8" r="19.6"/><circle cx="714.2" cy="647.2" r="19.6"/><circle cx="757.5" cy="637.2" r="19.6"/><circle cx="510.0" cy="697.8" r="19.6"/><circle cx="613.0" cy="720.5" r="19.6"/><circle cx="688.0" cy="727.0" r="19.6"/><circle cx="530.8" cy="735.2" r="19.6"/><circle cx="507.0" cy="751.5" r="19.6"/><circle cx="670.0" cy="739.8" r="19.6"/><circle cx="703.0" cy="752.8" r="19.6"/><circle cx="636.2" cy="760.8" r="19.6"/><circle cx="637.5" cy="772.5" r="19.6"/><circle cx="648.8" cy="784.0" r="19.6"/><circle cx="716.8" cy="782.2" r="19.6"/><circle cx="674.5" cy="831.0" r="19.6"/><circle cx="677.5" cy="827.8" r="19.6"/><circle cx="681.2" cy="834.0" r="19.6"/><circle cx="683.2" cy="833.5" r="19.6"/><circle cx="642.5" cy="839.0" r="19.6"/><circle cx="721.2" cy="835.8" r="19.6"/><circle cx="717.5" cy="840.8" r="19.6"/><circle cx="675.8" cy="869.8" r="19.6"/><circle cx="514.5" cy="843.5" r="19.6"/><circle cx="553.8" cy="855.2" r="19.6"/><circle cx="612.0" cy="855.5" r="19.6"/><circle cx="585.0" cy="867.8" r="19.6"/><circle cx="576.2" cy="884.8" r="19.6"/><circle cx="870.5" cy="761.0" r="19.6"/><circle cx="961.8" cy="798.5" r="19.6"/><circle cx="1008.8" cy="804.8" r="19.6"/><circle cx="823.8" cy="818.0" r="19.6"/><circle cx="803.0" cy="845.8" r="19.6"/><circle cx="750.0" cy="827.8" r="19.6"/><circle cx="838.2" cy="878.2" r="19.6"/><circle cx="629.6" cy="113.5" r="19.6"/><circle cx="667.0" cy="107.0" r="19.6"/><circle cx="696.0" cy="103.0" r="19.6"/><circle cx="749.0" cy="108.0" r="19.6"/><circle cx="758.0" cy="112.0" r="19.6"/><circle cx="770.0" cy="103.0" r="19.6"/><circle cx="850.0" cy="299.0" r="19.6"/><circle cx="679.0" cy="831.5" r="19.6"/><circle cx="679.0" cy="831.5" r="19.6"/></g></g><path d="M610.0 609.0 C619.2 612.5 652.3 625.8 665.0 630.0 C677.7 634.2 682.5 633.3 686.0 634.0" fill="none" stroke="#fff" stroke-opacity="0.9" stroke-width="2.2" stroke-linecap="round" stroke-linejoin="round"/><path d="M658.0 703.0 C659.5 698.3 662.5 685.5 667.0 675.0 C671.5 664.5 677.8 652.5 685.0 640.0 C692.2 627.5 701.7 610.0 710.0 600.0 C718.3 590.0 730.8 583.3 735.0 580.0" fill="none" stroke="#dffff8" stroke-opacity="0.85" stroke-width="1.9" stroke-linecap="round" stroke-linejoin="round"/><path d="M683.0 634.0 C689.2 637.5 707.7 645.7 720.0 655.0 C732.3 664.3 750.8 684.2 757.0 690.0" fill="none" stroke="#fff" stroke-opacity="0.5" stroke-width="1.0" stroke-linecap="round" stroke-linejoin="round"/><g fill="#f0a81c"><circle cx="410.8" cy="183.5" r="2.25"/><circle cx="402.0" cy="203.0" r="2.25"/><circle cx="616.8" cy="140.5" r="2.25"/><circle cx="578.8" cy="203.8" r="2.25"/><circle cx="573.8" cy="233.0" r="2.25"/><circle cx="583.0" cy="233.0" r="2.25"/><circle cx="698.2" cy="230.2" r="2.25"/><circle cx="682.0" cy="253.0" r="2.25"/><circle cx="738.2" cy="157.0" r="2.25"/><circle cx="557.5" cy="291.0" r="2.25"/><circle cx="572.5" cy="301.0" r="2.25"/><circle cx="654.5" cy="307.0" r="2.25"/><circle cx="640.0" cy="320.5" r="2.25"/><circle cx="628.8" cy="336.8" r="2.25"/><circle cx="588.5" cy="327.0" r="2.25"/><circle cx="582.5" cy="339.5" r="2.25"/><circle cx="890.0" cy="245.8" r="2.25"/><circle cx="866.2" cy="326.0" r="2.25"/><circle cx="855.0" cy="338.5" r="2.25"/><circle cx="864.5" cy="353.0" r="2.25"/><circle cx="974.5" cy="346.0" r="2.25"/><circle cx="1004.5" cy="385.5" r="2.25"/><circle cx="1006.2" cy="404.5" r="2.25"/><circle cx="587.8" cy="346.0" r="2.25"/><circle cx="588.0" cy="355.8" r="2.25"/><circle cx="595.0" cy="364.2" r="2.25"/><circle cx="610.0" cy="348.5" r="2.25"/><circle cx="554.2" cy="358.0" r="2.25"/><circle cx="533.8" cy="390.2" r="2.25"/><circle cx="557.0" cy="404.0" r="2.25"/><circle cx="580.2" cy="417.0" r="2.25"/><circle cx="582.8" cy="435.2" r="2.25"/><circle cx="498.8" cy="426.0" r="2.25"/><circle cx="509.5" cy="428.0" r="2.25"/><circle cx="543.8" cy="438.8" r="2.25"/><circle cx="514.5" cy="459.8" r="2.25"/><circle cx="503.8" cy="478.2" r="2.25"/><circle cx="539.8" cy="472.0" r="2.25"/><circle cx="569.2" cy="462.5" r="2.25"/><circle cx="463.8" cy="496.0" r="2.25"/><circle cx="482.0" cy="513.5" r="2.25"/><circle cx="499.2" cy="522.0" r="2.25"/><circle cx="524.2" cy="514.8" r="2.25"/><circle cx="557.0" cy="529.0" r="2.25"/><circle cx="355.0" cy="468.5" r="2.25"/><circle cx="204.2" cy="512.8" r="2.25"/><circle cx="323.2" cy="532.2" r="2.25"/><circle cx="489.8" cy="580.8" r="2.25"/><circle cx="474.5" cy="589.0" r="2.25"/><circle cx="448.2" cy="594.8" r="2.25"/><circle cx="451.2" cy="609.0" r="2.25"/><circle cx="452.0" cy="611.0" r="2.25"/><circle cx="454.2" cy="620.8" r="2.25"/><circle cx="501.0" cy="592.0" r="2.25"/><circle cx="513.2" cy="589.5" r="2.25"/><circle cx="522.5" cy="603.5" r="2.25"/><circle cx="509.2" cy="609.2" r="2.25"/><circle cx="515.5" cy="611.2" r="2.25"/><circle cx="502.2" cy="613.5" r="2.25"/><circle cx="535.0" cy="607.8" r="2.25"/><circle cx="552.5" cy="583.0" r="2.25"/><circle cx="460.0" cy="658.0" r="2.25"/><circle cx="710.0" cy="552.0" r="2.25"/><circle cx="738.0" cy="623.2" r="2.25"/><circle cx="525.0" cy="723.5" r="2.25"/><circle cx="749.2" cy="679.0" r="2.25"/><circle cx="949.2" cy="651.5" r="2.25"/><circle cx="917.5" cy="687.0" r="2.25"/><circle cx="1010.0" cy="679.5" r="2.25"/><circle cx="529.5" cy="745.8" r="2.25"/><circle cx="552.0" cy="739.0" r="2.25"/><circle cx="564.5" cy="748.0" r="2.25"/><circle cx="709.8" cy="805.2" r="2.25"/><circle cx="601.8" cy="841.0" r="2.25"/><circle cx="586.0" cy="864.0" r="2.25"/><circle cx="797.0" cy="874.5" r="2.25"/></g><g fill="#f53b75"><circle cx="614.0" cy="156.5" r="2.15"/><circle cx="604.5" cy="192.0" r="2.15"/><circle cx="583.8" cy="215.0" r="2.15"/><circle cx="582.5" cy="230.0" r="2.15"/><circle cx="586.0" cy="239.0" r="2.15"/><circle cx="574.8" cy="245.8" r="2.15"/><circle cx="672.0" cy="229.5" r="2.15"/><circle cx="720.0" cy="174.5" r="2.15"/><circle cx="733.8" cy="127.0" r="2.15"/><circle cx="658.5" cy="124.0" r="2.15"/><circle cx="723.8" cy="215.0" r="2.15"/><circle cx="728.8" cy="224.8" r="2.15"/><circle cx="737.5" cy="202.0" r="2.15"/><circle cx="731.8" cy="244.2" r="2.15"/><circle cx="690.5" cy="260.2" r="2.15"/><circle cx="690.5" cy="273.5" r="2.15"/><circle cx="698.8" cy="279.8" r="2.15"/><circle cx="674.5" cy="292.8" r="2.15"/><circle cx="679.5" cy="307.8" r="2.15"/><circle cx="679.5" cy="317.0" r="2.15"/><circle cx="666.2" cy="331.5" r="2.15"/><circle cx="622.5" cy="323.5" r="2.15"/><circle cx="598.0" cy="316.0" r="2.15"/><circle cx="565.0" cy="302.8" r="2.15"/><circle cx="526.8" cy="319.0" r="2.15"/><circle cx="537.5" cy="325.2" r="2.15"/><circle cx="853.2" cy="263.8" r="2.15"/><circle cx="832.2" cy="278.5" r="2.15"/><circle cx="849.5" cy="299.8" r="2.15"/><circle cx="821.2" cy="307.5" r="2.15"/><circle cx="802.0" cy="335.2" r="2.15"/><circle cx="777.0" cy="357.8" r="2.15"/><circle cx="803.0" cy="371.0" r="2.15"/><circle cx="798.0" cy="431.5" r="2.15"/><circle cx="862.0" cy="449.0" r="2.15"/><circle cx="965.8" cy="455.5" r="2.15"/><circle cx="838.5" cy="522.2" r="2.15"/><circle cx="1035.5" cy="379.0" r="2.15"/><circle cx="534.2" cy="351.5" r="2.15"/><circle cx="530.8" cy="356.5" r="2.15"/><circle cx="528.0" cy="361.5" r="2.15"/><circle cx="531.8" cy="380.8" r="2.15"/><circle cx="581.0" cy="389.0" r="2.15"/><circle cx="586.0" cy="413.2" r="2.15"/><circle cx="594.2" cy="411.5" r="2.15"/><circle cx="610.5" cy="418.5" r="2.15"/><circle cx="602.0" cy="424.5" r="2.15"/><circle cx="577.5" cy="429.0" r="2.15"/><circle cx="589.2" cy="445.8" r="2.15"/><circle cx="591.0" cy="444.0" r="2.15"/><circle cx="579.2" cy="447.8" r="2.15"/><circle cx="503.2" cy="446.0" r="2.15"/><circle cx="513.2" cy="475.0" r="2.15"/><circle cx="563.8" cy="470.2" r="2.15"/><circle cx="545.0" cy="497.8" r="2.15"/><circle cx="521.8" cy="509.0" r="2.15"/><circle cx="493.2" cy="522.2" r="2.15"/><circle cx="590.5" cy="521.0" r="2.15"/><circle cx="552.5" cy="533.5" r="2.15"/><circle cx="627.0" cy="342.0" r="2.15"/><circle cx="640.0" cy="343.5" r="2.15"/><circle cx="647.5" cy="356.5" r="2.15"/><circle cx="572.5" cy="546.5" r="2.15"/><circle cx="560.0" cy="563.2" r="2.15"/><circle cx="544.2" cy="579.0" r="2.15"/><circle cx="570.8" cy="582.2" r="2.15"/><circle cx="458.8" cy="560.8" r="2.15"/><circle cx="467.8" cy="606.8" r="2.15"/><circle cx="683.8" cy="577.2" r="2.15"/><circle cx="660.0" cy="606.5" r="2.15"/><circle cx="685.8" cy="614.8" r="2.15"/><circle cx="714.2" cy="647.2" r="2.15"/><circle cx="757.5" cy="637.2" r="2.15"/><circle cx="510.0" cy="697.8" r="2.15"/><circle cx="613.0" cy="720.5" r="2.15"/><circle cx="688.0" cy="727.0" r="2.15"/><circle cx="530.8" cy="735.2" r="2.15"/><circle cx="507.0" cy="751.5" r="2.15"/><circle cx="670.0" cy="739.8" r="2.15"/><circle cx="703.0" cy="752.8" r="2.15"/><circle cx="636.2" cy="760.8" r="2.15"/><circle cx="637.5" cy="772.5" r="2.15"/><circle cx="648.8" cy="784.0" r="2.15"/><circle cx="716.8" cy="782.2" r="2.15"/><circle cx="674.5" cy="831.0" r="2.15"/><circle cx="677.5" cy="827.8" r="2.15"/><circle cx="681.2" cy="834.0" r="2.15"/><circle cx="683.2" cy="833.5" r="2.15"/><circle cx="642.5" cy="839.0" r="2.15"/><circle cx="721.2" cy="835.8" r="2.15"/><circle cx="717.5" cy="840.8" r="2.15"/><circle cx="675.8" cy="869.8" r="2.15"/><circle cx="514.5" cy="843.5" r="2.15"/><circle cx="553.8" cy="855.2" r="2.15"/><circle cx="612.0" cy="855.5" r="2.15"/><circle cx="585.0" cy="867.8" r="2.15"/><circle cx="576.2" cy="884.8" r="2.15"/><circle cx="870.5" cy="761.0" r="2.15"/><circle cx="961.8" cy="798.5" r="2.15"/><circle cx="1008.8" cy="804.8" r="2.15"/><circle cx="823.8" cy="818.0" r="2.15"/><circle cx="803.0" cy="845.8" r="2.15"/><circle cx="750.0" cy="827.8" r="2.15"/><circle cx="838.2" cy="878.2" r="2.15"/></g></svg><div class="legend"><div class="t">MARKET POTENTIAL</div><div class="lo">LOW</div><div class="hi">HIGH</div><div class="bar"></div><div class="d" style="top:72px;background:#e8a912"></div><div class="it" style="top:70.5px;transform:scaleX(.868)">RETAIL LOCATION</div><div class="d" style="top:91px;background:#f2386e"></div><div class="it" style="top:89.5px;transform:scaleX(.835)">TOWER SITE</div></div><div class="zoomlbl">13</div><div class="zoombox"><svg width="46" height="24"><path d="M8.5 12.3H16.5 M30.5 12.3H39 M34.75 8V16.6" stroke="#7a7a7a" stroke-width="1" fill="none"/></svg></div><div class="searchbox"><svg width="24.5" height="24"><circle cx="11.2" cy="11" r="3.1" fill="none" stroke="#8a8a8a" stroke-width="1.1"/><path d="M13.5 13.4L16.6 16.6" stroke="#8a8a8a" stroke-width="1.3"/></svg></div><div class="sharebox"><svg width="23" height="23"><path d="M6.5 12.6 L15.7 7.6 L15.8 14.6 L12.6 13.4 L11.6 15.8 L10.9 12.9 Z" fill="#b9b9b9"/><path d="M10.9 12.9 L15.7 7.6 L12.6 13.4" fill="#d8d8d8"/></svg></div><div class="help">?</div></div><svg class="panel" width="267" height="747" viewBox="0 0 267 747" font-family='&quot;Liberation Sans&quot;, sans-serif'><rect width="267" height="747" fill="#fff"/><path d="M20.8 -3.4H245.5" stroke="#f3f3f3" stroke-width="1"/><path d="M20.8 14.8H245.5" stroke="#f3f3f3" stroke-width="1"/><path d="M133.4 -3.9V32.5" stroke="#efefef" stroke-width="1"/><path d="M189.7 -3.9V32.5" stroke="#efefef" stroke-width="1"/><path d="M245.0 -3.9V32.5" stroke="#efefef" stroke-width="1"/><rect x="20.80" y="19.40" width="36.85" height="13.10" fill="#9adfa9"/><rect x="59.15" y="-3.90" width="35.95" height="36.40" fill="#9adfa9"/><rect x="96.60" y="9.93" width="35.95" height="22.57" fill="#efefef"/><rect x="96.60" y="29.95" width="35.95" height="2.55" fill="#9adfa9"/><rect x="134.05" y="27.40" width="35.95" height="5.10" fill="#efefef"/><rect x="20.80" y="32.20" width="224.70" height="1.60" fill="#dcdcdc"/><text x="20.8" y="44.3" font-size="7.5" fill="#9a9a9a">11.10</text><text x="77.1" y="44.3" font-size="7.5" fill="#9a9a9a" text-anchor="middle">29.40</text><text x="133.4" y="44.3" font-size="7.5" fill="#9a9a9a" text-anchor="middle">47.70</text><text x="189.7" y="44.3" font-size="7.5" fill="#9a9a9a" text-anchor="middle">66</text><text x="245.6" y="44.3" font-size="7.5" fill="#9a9a9a" text-anchor="end">84.30</text><defs><linearGradient id="fade" x1="0" y1="0" x2="0" y2="1"><stop offset="0" stop-color="#fff" stop-opacity="1"/><stop offset=".3" stop-color="#fff" stop-opacity=".72"/><stop offset=".68" stop-color="#fff" stop-opacity=".32"/><stop offset="1" stop-color="#fff" stop-opacity="0"/></linearGradient></defs><rect x="0" y="0" width="267" height="48" fill="url(#fade)"/><path d="M20.8 131.3H245.5" stroke="#f3f3f3" stroke-width="1"/><path d="M20.8 149.5H245.5" stroke="#f3f3f3" stroke-width="1"/><path d="M133.4 130.8V167.2" stroke="#efefef" stroke-width="1"/><path d="M189.7 130.8V167.2" stroke="#efefef" stroke-width="1"/><path d="M245.0 130.8V167.2" stroke="#efefef" stroke-width="1"/><rect x="20.80" y="130.80" width="36.85" height="36.40" fill="#9adfa9"/><rect x="59.15" y="130.80" width="35.95" height="18.20" fill="#efefef"/><path d="M77.1 130.8V149.0" stroke="#e2e2e2" stroke-width="1"/><rect x="59.15" y="149.00" width="35.95" height="18.20" fill="#9adfa9"/><rect x="96.60" y="159.92" width="35.95" height="7.28" fill="#efefef"/><rect x="96.60" y="165.02" width="35.95" height="2.18" fill="#9adfa9"/><rect x="20.80" y="166.90" width="224.70" height="1.60" fill="#dcdcdc"/><text x="20.8" y="179.0" font-size="7.5" fill="#9a9a9a">2.5k</text><text x="77.1" y="179.0" font-size="7.5" fill="#9a9a9a" text-anchor="middle">64k</text><text x="133.4" y="179.0" font-size="7.5" fill="#9a9a9a" text-anchor="middle">130k</text><text x="189.7" y="179.0" font-size="7.5" fill="#9a9a9a" text-anchor="middle">190k</text><text x="245.6" y="179.0" font-size="7.5" fill="#9a9a9a" text-anchor="end">250k</text><text x="18.0" y="93.2" font-size="13.4" fill="#2e3c43" textLength="146.3" lengthAdjust="spacingAndGlyphs">Target Household Income</text><text x="18.0" y="108.7" font-size="7.9" fill="#636d72" textLength="48.4" lengthAdjust="spacingAndGlyphs">0 NULL ROWS</text><text x="77.6" y="108.7" font-size="7.9" fill="#636d72" textLength="31.1" lengthAdjust="spacingAndGlyphs">2.5K MIN</text><text x="119.8" y="108.7" font-size="7.9" fill="#636d72" textLength="29.1" lengthAdjust="spacingAndGlyphs">42K AVG</text><text x="160.3" y="108.7" font-size="7.9" fill="#636d72" textLength="35.1" lengthAdjust="spacingAndGlyphs">250K MAX</text><circle cx="231.0" cy="88.7" r="5.8" fill="none" stroke="#3a9ede" stroke-width="1"/><path d="M231.00 85.80 c1.05 1.4 1.7 2.2 1.7 3.1 a1.7 1.7 0 0 1 -3.4 0 c0 -.9 .65 -1.7 1.7 -3.1z" fill="none" stroke="#3a9ede" stroke-width="1.1"/><circle cx="247.9" cy="83.7" r="1.35" fill="#3f8fcb"/><circle cx="247.9" cy="88.4" r="1.35" fill="#3f8fcb"/><circle cx="247.9" cy="93.1" r="1.35" fill="#3f8fcb"/><path d="M20.8 266.0H245.5" stroke="#f3f3f3" stroke-width="1"/><path d="M20.8 284.2H245.5" stroke="#f3f3f3" stroke-width="1"/><path d="M133.4 265.5V301.9" stroke="#efefef" stroke-width="1"/><path d="M189.7 265.5V301.9" stroke="#efefef" stroke-width="1"/><path d="M245.0 265.5V301.9" stroke="#efefef" stroke-width="1"/><rect x="20.80" y="265.50" width="36.85" height="36.40" fill="#9adfa9"/><rect x="59.15" y="265.50" width="35.95" height="36.40" fill="#efefef"/><path d="M77.1 265.5V301.9" stroke="#e2e2e2" stroke-width="1"/><rect x="96.60" y="295.35" width="35.95" height="6.55" fill="#efefef"/><rect x="20.80" y="301.60" width="224.70" height="1.60" fill="#dcdcdc"/><text x="20.8" y="313.7" font-size="7.5" fill="#9a9a9a">0</text><text x="77.1" y="313.7" font-size="7.5" fill="#9a9a9a" text-anchor="middle">0.25</text><text x="133.4" y="313.7" font-size="7.5" fill="#9a9a9a" text-anchor="middle">0.50</text><text x="189.7" y="313.7" font-size="7.5" fill="#9a9a9a" text-anchor="middle">0.75</text><text x="245.6" y="313.7" font-size="7.5" fill="#9a9a9a" text-anchor="end">1</text><text x="18.0" y="227.9" font-size="13.4" fill="#2e3c43" textLength="99.2" lengthAdjust="spacingAndGlyphs">Home Ownership</text><text x="18.0" y="243.4" font-size="7.9" fill="#636d72" textLength="48.4" lengthAdjust="spacingAndGlyphs">0 NULL ROWS</text><text x="77.6" y="243.4" font-size="7.9" fill="#636d72" textLength="19.9" lengthAdjust="spacingAndGlyphs">0 MIN</text><text x="108.6" y="243.4" font-size="7.9" fill="#636d72" textLength="31.1" lengthAdjust="spacingAndGlyphs">0.05 AVG</text><text x="151.0" y="243.4" font-size="7.9" fill="#636d72" textLength="21.4" lengthAdjust="spacingAndGlyphs">1 MAX</text><circle cx="231.0" cy="223.4" r="5.8" fill="none" stroke="#3a9ede" stroke-width="1"/><path d="M231.00 220.50 c1.05 1.4 1.7 2.2 1.7 3.1 a1.7 1.7 0 0 1 -3.4 0 c0 -.9 .65 -1.7 1.7 -3.1z" fill="none" stroke="#3a9ede" stroke-width="1.1"/><circle cx="247.9" cy="218.4" r="1.35" fill="#3f8fcb"/><circle cx="247.9" cy="223.1" r="1.35" fill="#3f8fcb"/><circle cx="247.9" cy="227.8" r="1.35" fill="#3f8fcb"/><path d="M20.8 400.7H245.5" stroke="#f3f3f3" stroke-width="1"/><path d="M20.8 418.9H245.5" stroke="#f3f3f3" stroke-width="1"/><path d="M133.4 400.2V436.6" stroke="#efefef" stroke-width="1"/><path d="M189.7 400.2V436.6" stroke="#efefef" stroke-width="1"/><path d="M245.0 400.2V436.6" stroke="#efefef" stroke-width="1"/><rect x="20.80" y="432.23" width="36.85" height="4.37" fill="#efefef"/><rect x="59.15" y="400.20" width="35.95" height="36.40" fill="#9adfa9"/><rect x="96.60" y="417.31" width="35.95" height="6.19" fill="#efefef"/><rect x="96.60" y="423.50" width="35.95" height="13.10" fill="#9adfa9"/><rect x="134.05" y="423.50" width="35.95" height="13.10" fill="#9adfa9"/><rect x="208.95" y="435.51" width="35.95" height="1.09" fill="#efefef"/><rect x="20.80" y="436.30" width="224.70" height="1.60" fill="#dcdcdc"/><text x="20.8" y="448.4" font-size="7.5" fill="#9a9a9a">10</text><text x="77.1" y="448.4" font-size="7.5" fill="#9a9a9a" text-anchor="middle">26.92</text><text x="133.4" y="448.4" font-size="7.5" fill="#9a9a9a" text-anchor="middle">43.85</text><text x="189.7" y="448.4" font-size="7.5" fill="#9a9a9a" text-anchor="middle">60.77</text><text x="245.6" y="448.4" font-size="7.5" fill="#9a9a9a" text-anchor="end">77.70</text><text x="18.0" y="362.6" font-size="13.4" fill="#2e3c43" textLength="167.1" lengthAdjust="spacingAndGlyphs">Disposable Income Percentile</text><text x="18.0" y="378.1" font-size="7.9" fill="#636d72" textLength="48.4" lengthAdjust="spacingAndGlyphs">0 NULL ROWS</text><text x="77.6" y="378.1" font-size="7.9" fill="#636d72" textLength="24.6" lengthAdjust="spacingAndGlyphs">10 MIN</text><text x="113.1" y="378.1" font-size="7.9" fill="#636d72" textLength="35.1" lengthAdjust="spacingAndGlyphs">34.45 AVG</text><text x="159.6" y="378.1" font-size="7.9" fill="#636d72" textLength="36.4" lengthAdjust="spacingAndGlyphs">77.70 MAX</text><circle cx="231.0" cy="358.1" r="5.8" fill="none" stroke="#3a9ede" stroke-width="1"/><path d="M231.00 355.20 c1.05 1.4 1.7 2.2 1.7 3.1 a1.7 1.7 0 0 1 -3.4 0 c0 -.9 .65 -1.7 1.7 -3.1z" fill="none" stroke="#3a9ede" stroke-width="1.1"/><circle cx="247.9" cy="353.1" r="1.35" fill="#3f8fcb"/><circle cx="247.9" cy="357.8" r="1.35" fill="#3f8fcb"/><circle cx="247.9" cy="362.5" r="1.35" fill="#3f8fcb"/><rect x="0.00" y="64.00" width="267.00" height="1.60" fill="#f1f5f8"/><rect x="0.00" y="198.70" width="267.00" height="1.60" fill="#f1f5f8"/><rect x="0.00" y="333.40" width="267.00" height="1.60" fill="#f1f5f8"/><rect x="0.00" y="468.30" width="267.00" height="1.60" fill="#f1f5f8"/><rect x="0.00" y="593.80" width="267.00" height="1.60" fill="#f1f5f8"/><text x="18.0" y="497.8" font-size="13.4" fill="#2e3c43" textLength="108.2" lengthAdjust="spacingAndGlyphs">Current Customers</text><text x="18.0" y="513.0" font-size="7.9" fill="#636d72" textLength="54.9" lengthAdjust="spacingAndGlyphs">0% NULL ROWS</text><text x="83.6" y="513.0" font-size="7.9" fill="#636d72" textLength="57.6" lengthAdjust="spacingAndGlyphs">0.04% OF TOTAL</text><circle cx="231.0" cy="493.2" r="6.3" fill="#2e9be0"/><path d="M231.00 490.30 c1.05 1.4 1.7 2.2 1.7 3.1 a1.7 1.7 0 0 1 -3.4 0 c0 -.9 .65 -1.7 1.7 -3.1z" fill="none" stroke="#fff" stroke-width="1.1"/><circle cx="247.9" cy="488.2" r="1.35" fill="#3f8fcb"/><circle cx="247.9" cy="492.9" r="1.35" fill="#3f8fcb"/><circle cx="247.9" cy="497.6" r="1.35" fill="#3f8fcb"/><text x="18.0" y="533.2" font-size="7.9" fill="#2e3c43" font-weight="bold" textLength="50.4" lengthAdjust="spacingAndGlyphs">ALL SELECTED</text><text x="73.7" y="533.2" font-size="7.9" fill="#3a9ede" textLength="19.3" lengthAdjust="spacingAndGlyphs">LOCK</text><text x="208.7" y="533.7" font-size="7.9" fill="#3a9ede" textLength="12.0" lengthAdjust="spacingAndGlyphs">ALL</text><text x="249.0" y="533.7" font-size="7.9" fill="#3a9ede" text-anchor="end" textLength="21.4" lengthAdjust="spacingAndGlyphs">NONE</text><text x="18.0" y="552.3" font-size="7.9" fill="#2e3c43" font-weight="bold" textLength="18.2" lengthAdjust="spacingAndGlyphs">TRUE</text><text x="249.0" y="552.3" font-size="7.9" fill="#636d72" text-anchor="end" textLength="8.1" lengthAdjust="spacingAndGlyphs">28</text><rect x="18.00" y="558.30" width="231.00" height="3.50" fill="#e8891c" rx="1.7"/><text x="18.0" y="622.9" font-size="13.4" fill="#2e3c43" textLength="105.6" lengthAdjust="spacingAndGlyphs">Highway Proximity</text><text x="18.0" y="638.2" font-size="7.9" fill="#636d72" textLength="54.9" lengthAdjust="spacingAndGlyphs">0% NULL ROWS</text><text x="83.6" y="638.2" font-size="7.9" fill="#636d72" textLength="57.6" lengthAdjust="spacingAndGlyphs">0.04% OF TOTAL</text><circle cx="231.0" cy="618.5" r="5.8" fill="none" stroke="#3a9ede" stroke-width="1"/><path d="M231.00 615.60 c1.05 1.4 1.7 2.2 1.7 3.1 a1.7 1.7 0 0 1 -3.4 0 c0 -.9 .65 -1.7 1.7 -3.1z" fill="none" stroke="#3a9ede" stroke-width="1.1"/><circle cx="247.9" cy="613.5" r="1.35" fill="#3f8fcb"/><circle cx="247.9" cy="618.2" r="1.35" fill="#3f8fcb"/><circle cx="247.9" cy="622.9" r="1.35" fill="#3f8fcb"/><text x="18.0" y="658.6" font-size="7.9" fill="#2e3c43" font-weight="bold" textLength="50.4" lengthAdjust="spacingAndGlyphs">ALL SELECTED</text><text x="249.0" y="659.1" font-size="7.9" fill="#3a9ede" text-anchor="end" textLength="21.4" lengthAdjust="spacingAndGlyphs">NONE</text><text x="18.0" y="679.0" font-size="7.9" fill="#2e3c43" font-weight="bold" textLength="96.0" lengthAdjust="spacingAndGlyphs">CONNECTED TO HIGHWAY</text><text x="249.0" y="679.0" font-size="7.9" fill="#636d72" text-anchor="end" textLength="8.1" lengthAdjust="spacingAndGlyphs">24</text><rect x="18.00" y="684.20" width="231.00" height="2.80" fill="#92d89f" rx="1.4"/><text x="18.0" y="705.1" font-size="7.9" fill="#2e3c43" font-weight="bold" textLength="49.5" lengthAdjust="spacingAndGlyphs">NO HIGHWAY</text><text x="249.0" y="705.1" font-size="7.9" fill="#636d72" text-anchor="end">4</text><rect x="18.00" y="711.20" width="231.00" height="2.80" fill="#eeeeee" rx="1.4"/><rect x="18.00" y="711.20" width="38.10" height="2.80" fill="#92d89f" rx="1.4"/></svg></div></body></html>
